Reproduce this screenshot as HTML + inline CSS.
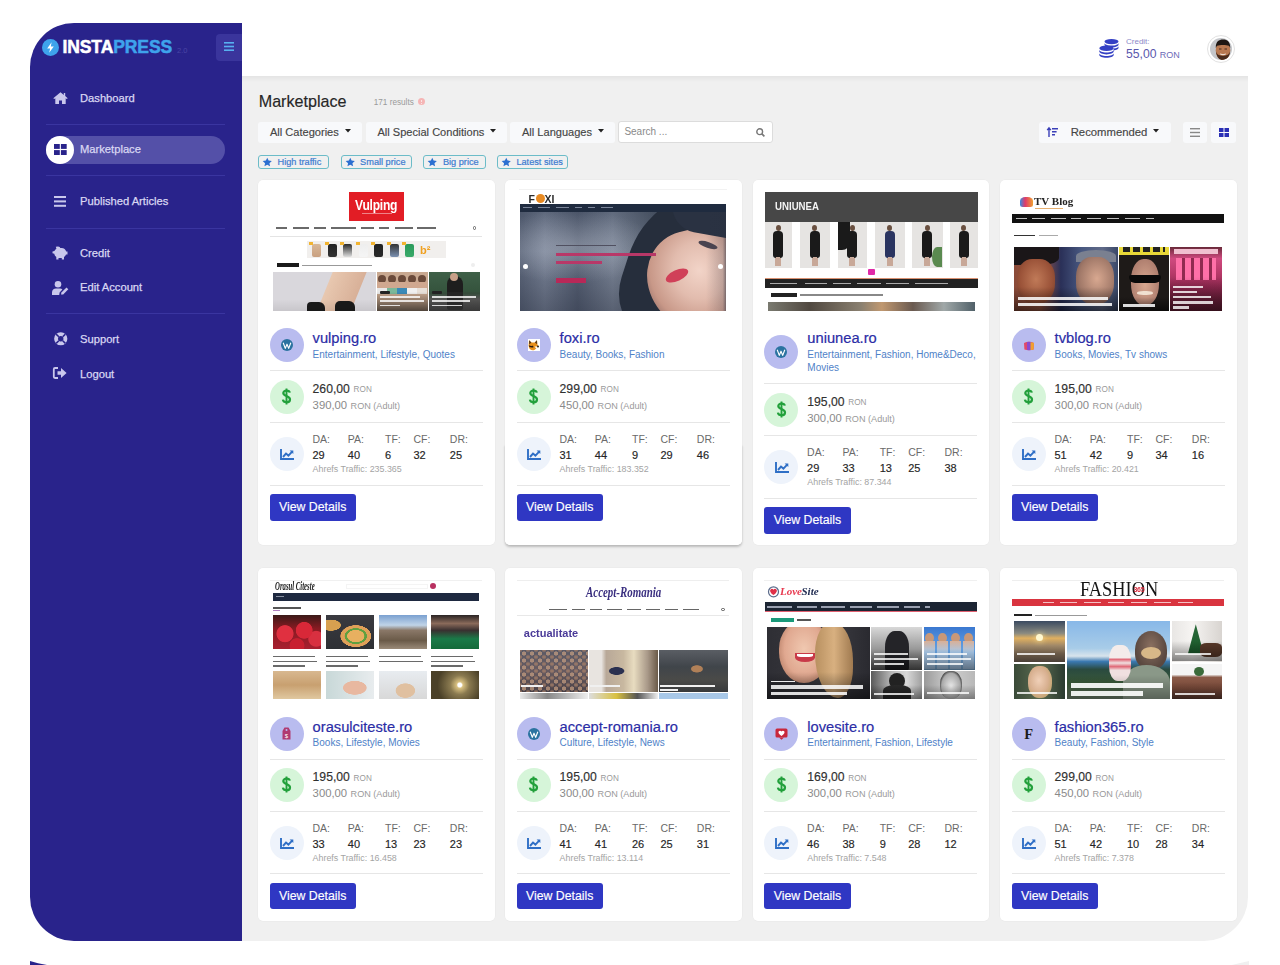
<!DOCTYPE html><html><head><meta charset="utf-8"><style>
*{box-sizing:border-box}
html,body{margin:0;padding:0}
body{width:1280px;height:965px;background:#fff;position:relative;overflow:hidden;font-family:"Liberation Sans",sans-serif}
.t{position:absolute;white-space:nowrap;line-height:1}
.r{position:absolute}
svg{position:absolute;overflow:visible}
</style></head><body>

<div class="r" style="left:242.00px;top:76.00px;width:1006.00px;height:865.00px;background:#f0f0f0;border-bottom-right-radius:44px"></div>
<div class="r" style="left:242.00px;top:76.00px;width:1006.00px;height:6.00px;background:linear-gradient(#e4e4e4,#f0f0f0);"></div>
<div class="r" style="left:242.00px;top:23.00px;width:1006.00px;height:53.00px;background:#ffffff;"></div>
<div class="r" style="left:30.00px;top:23.00px;width:212.00px;height:918.00px;background:#29238b;border-radius:44px 0 0 44px"></div>
<svg style="left:0;top:0" width="1280" height="965"><polygon points="30,961 38,963.2 47,965 30,965" fill="#29238b"/><polygon points="1249,961 1236,964 1232,965 1249,965" fill="#f0f0f0"/></svg>
<svg style="left:42px;top:38.5px" width="17" height="17" viewBox="0 0 17 17"><circle cx="8.5" cy="8.5" r="8.5" fill="#3ea3ec"/><path d="M9.6 3.2 L5.2 9.4 H8.1 L7.2 13.8 L11.8 7.4 H8.8 Z" fill="#fff"/></svg>
<div class="t" style="left:62.50px;top:39.39px;font-size:17.5px;color:#333;font-weight:700;letter-spacing:-0.1px"><span style="color:#fff;-webkit-text-stroke:0.5px #fff">INSTA</span><span style="color:#3ea3ec;-webkit-text-stroke:0.5px #3ea3ec">PRESS</span></div>
<div class="t" style="left:177.00px;top:47.15px;font-size:7.5px;color:#4a46a6;font-weight:400;">2.0</div>
<div class="r" style="left:216.00px;top:33.50px;width:26.00px;height:27.50px;background:#3a359c;border-radius:4px 0 0 4px"></div>
<svg style="left:224px;top:42px" width="10" height="9" viewBox="0 0 10 9"><rect x="0" y="0" width="10" height="1.6" fill="#57b0f0"/><rect x="0" y="3.7" width="10" height="1.6" fill="#57b0f0"/><rect x="0" y="7.4" width="10" height="1.6" fill="#57b0f0"/></svg>
<div class="r" style="left:46.00px;top:124.00px;width:179.00px;height:1.00px;background:#3a35a0;"></div>
<div class="r" style="left:46.00px;top:175.00px;width:179.00px;height:1.00px;background:#3a35a0;"></div>
<div class="r" style="left:46.00px;top:227.50px;width:179.00px;height:1.00px;background:#3a35a0;"></div>
<div class="r" style="left:46.00px;top:313.00px;width:179.00px;height:1.00px;background:#3a35a0;"></div>
<div class="r" style="left:46.00px;top:136.00px;width:179.00px;height:28.00px;background:#5450a8;border-radius:14px"></div>
<div class="r" style="left:46.00px;top:136.00px;width:28.00px;height:28.00px;background:#fff;border-radius:14px"></div>
<svg style="left:53.8px;top:144.4px" width="12.7" height="11" viewBox="0 0 12.7 11"><rect x="0" y="0" width="5.8" height="4.9" fill="#29238b"/><rect x="6.9" y="0" width="5.8" height="4.9" fill="#29238b"/><rect x="0" y="6.1" width="5.8" height="4.9" fill="#29238b"/><rect x="6.9" y="6.1" width="5.8" height="4.9" fill="#29238b"/></svg>
<div class="t" style="left:80.00px;top:92.52px;font-size:11.2px;color:#d9d7f2;font-weight:400;-webkit-text-stroke:0.25px #d9d7f2">Dashboard</div>
<div class="t" style="left:80.00px;top:143.92px;font-size:11.2px;color:#d9d7f2;font-weight:400;-webkit-text-stroke:0.25px #d9d7f2">Marketplace</div>
<div class="t" style="left:80.00px;top:196.02px;font-size:11.2px;color:#d9d7f2;font-weight:400;-webkit-text-stroke:0.25px #d9d7f2">Published Articles</div>
<div class="t" style="left:80.00px;top:248.02px;font-size:11.2px;color:#d9d7f2;font-weight:400;-webkit-text-stroke:0.25px #d9d7f2">Credit</div>
<div class="t" style="left:80.00px;top:282.27px;font-size:11.2px;color:#d9d7f2;font-weight:400;-webkit-text-stroke:0.25px #d9d7f2">Edit Account</div>
<div class="t" style="left:80.00px;top:334.27px;font-size:11.2px;color:#d9d7f2;font-weight:400;-webkit-text-stroke:0.25px #d9d7f2">Support</div>
<div class="t" style="left:80.00px;top:368.52px;font-size:11.2px;color:#d9d7f2;font-weight:400;-webkit-text-stroke:0.25px #d9d7f2">Logout</div>
<svg style="left:52.8px;top:92px" width="15" height="12" viewBox="0 0 15 12"><path d="M7.5 0.3 L0.3 6.2 L1.2 7.1 L2.3 6.2 V12 H6 V8.5 H9 V12 H12.7 V6.2 L13.8 7.1 L14.7 6.2 L12.2 4.1 V1 H10.8 V2.9 Z" fill="#c9c7ec"/></svg>
<svg style="left:54.4px;top:196.4px" width="12" height="11" viewBox="0 0 12 11"><rect y="0" width="12" height="2" fill="#c9c7ec"/><rect y="4.4" width="12" height="2" fill="#c9c7ec"/><rect y="8.8" width="12" height="2" fill="#c9c7ec"/></svg>
<svg style="left:52px;top:246px" width="16" height="14" viewBox="0 0 16 14"><path d="M6 0.5 C7.5 0.5 8.2 1.5 8.2 2 H9.5 C12 2 13.8 3.6 14.2 5.5 H15.5 V8.5 H14 C13.6 9.6 12.9 10.4 12 11 V13.5 H9.8 V12 H6.5 V13.5 H4.3 V11 C3.2 10.2 2.5 9 2.3 7.8 L0.5 7.2 V5.4 L2.4 5 C2.8 4 3.5 3.2 4.4 2.7 L3.8 0.8 Z" fill="#c9c7ec"/></svg>
<svg style="left:52px;top:281px" width="17" height="14" viewBox="0 0 17 14"><circle cx="6" cy="3.3" r="3.3" fill="#c9c7ec"/><path d="M0 14 V11.5 C0 9.2 1.8 7.6 4 7.6 H8 C9 7.6 9.8 7.9 10.4 8.4 L7.6 11.4 L7.2 14 Z" fill="#c9c7ec"/><path d="M9 13.6 L9.4 11.6 L14.5 6.5 L16.3 8.3 L11.2 13.4 Z" fill="#c9c7ec"/></svg>
<svg style="left:53.5px;top:332.3px" width="13.5" height="13.5" viewBox="0 0 13.5 13.5"><circle cx="6.75" cy="6.75" r="6.6" fill="#c9c7ec"/><circle cx="6.75" cy="6.75" r="2.7" fill="#29238b"/><path d="M2.1 2.1 L4.8 4.8 M11.4 2.1 L8.7 4.8 M2.1 11.4 L4.8 8.7 M11.4 11.4 L8.7 8.7" stroke="#29238b" stroke-width="1.5"/></svg>
<svg style="left:53px;top:367px" width="14" height="12" viewBox="0 0 14 12"><path d="M5 1 H2 C1.2 1 0.8 1.5 0.8 2.2 V9.8 C0.8 10.5 1.2 11 2 11 H5" fill="none" stroke="#c9c7ec" stroke-width="1.8"/><path d="M4.5 4.3 H8 V1 L13.6 6 L8 11 V7.7 H4.5 Z" fill="#c9c7ec"/></svg>
<svg style="left:1099px;top:39.4px" width="20" height="19" viewBox="0 0 20 19"><g fill="#3440c4"><ellipse cx="12.5" cy="2.6" rx="7" ry="2.6"/><path d="M5.5 4 C5.5 5.5 8.6 6.6 12.5 6.6 C16.4 6.6 19.5 5.5 19.5 4 V5.8 C19.5 7.3 16.4 8.4 12.5 8.4 C8.6 8.4 5.5 7.3 5.5 5.8Z"/><path d="M19.5 7.2 V9 C19.5 10.2 17.5 11.1 14.6 11.4 V9.6 C17.5 9.3 19.5 8.4 19.5 7.2Z"/><ellipse cx="7.5" cy="9.2" rx="7.2" ry="2.8"/><path d="M0.3 10.8 C0.3 12.4 3.5 13.6 7.5 13.6 C11.5 13.6 14.7 12.4 14.7 10.8 V12.6 C14.7 14.2 11.5 15.4 7.5 15.4 C3.5 15.4 0.3 14.2 0.3 12.6Z"/><path d="M0.3 14.2 C0.3 15.8 3.5 17 7.5 17 C11.5 17 14.7 15.8 14.7 14.2 V16 C14.7 17.6 11.5 18.8 7.5 18.8 C3.5 18.8 0.3 17.6 0.3 16Z"/></g></svg>
<div class="t" style="left:1126.00px;top:38.23px;font-size:8px;color:#8c89c9;font-weight:400;">Credit:</div>
<div class="t" style="left:1126.00px;top:48.17px;font-size:12.2px;color:#5a57ad;font-weight:400;">55,00</div>
<div class="t" style="left:1159.70px;top:50.88px;font-size:9px;color:#6c69b6;font-weight:400;">RON</div>
<div class="r" style="left:1206.7px;top:34.7px;width:28px;height:28px;border-radius:50%;background:#fff;border:1px solid #e2e2e2"></div>
<svg style="left:1210px;top:37.8px" width="22" height="22" viewBox="0 0 22 22"><defs><clipPath id="av"><circle cx="11" cy="11" r="11"/></clipPath></defs><g clip-path="url(#av)"><rect width="22" height="22" fill="#c4c6ca"/><ellipse cx="13" cy="12.5" rx="7.3" ry="9.5" fill="#b87850"/><path d="M5.8 10 C5.5 3.5 9 1.5 13 1.5 C17.5 1.5 20.5 4 20.2 10 L19 7.8 C16 6.8 10 6.8 7 7.8Z" fill="#1e1612"/><path d="M6 13.5 C6.5 19.5 9.5 22 13 22 C16.5 22 19.5 19.5 20 13.5 C18.5 17 16.5 17.8 13 17.8 C9.5 17.8 7.5 17 6 13.5Z" fill="#4a2c1c"/><path d="M10.2 16 Q13 17.5 15.8 16" stroke="#f4ece4" stroke-width="1" fill="none"/><path d="M9 11 H11.5 M14.5 11 H17" stroke="#3a2418" stroke-width="0.9"/></g></svg>
<div class="t" style="left:258.75px;top:93.47px;font-size:16.1px;color:#262626;font-weight:400;-webkit-text-stroke:0.15px #262626">Marketplace</div>
<div class="t" style="left:373.75px;top:98.96px;font-size:8.2px;color:#9a9a9a;font-weight:400;">171 results</div>
<div class="r" style="left:417.7px;top:98px;width:7px;height:7px;border-radius:50%;background:#f5b5b5"></div><div class="r" style="left:420.7px;top:99.6px;width:1px;height:2.6px;background:#fbe4e4"></div><div class="r" style="left:420.7px;top:102.6px;width:1px;height:1px;background:#fbe4e4"></div>
<div class="r" style="left:258.00px;top:122.00px;width:104.00px;height:21.00px;background:#f8f9fb;border-radius:3px"></div>
<div class="t" style="left:270.00px;top:126.55px;font-size:11.05px;color:#454545;font-weight:400;-webkit-text-stroke:0.15px #454545">All Categories</div>
<svg style="left:344.5px;top:129px" width="6" height="3.5" viewBox="0 0 6 3.5"><path d="M0 0 H6 L3 3.5Z" fill="#222"/></svg>
<div class="r" style="left:365.60px;top:122.00px;width:141.40px;height:21.00px;background:#f8f9fb;border-radius:3px"></div>
<div class="t" style="left:377.50px;top:126.55px;font-size:11.05px;color:#454545;font-weight:400;-webkit-text-stroke:0.15px #454545">All Special Conditions</div>
<svg style="left:489.5px;top:129px" width="6" height="3.5" viewBox="0 0 6 3.5"><path d="M0 0 H6 L3 3.5Z" fill="#222"/></svg>
<div class="r" style="left:510.00px;top:122.00px;width:105.00px;height:21.00px;background:#f8f9fb;border-radius:3px"></div>
<div class="t" style="left:522.00px;top:126.55px;font-size:11.05px;color:#454545;font-weight:400;-webkit-text-stroke:0.15px #454545">All Languages</div>
<svg style="left:597.5px;top:129px" width="6" height="3.5" viewBox="0 0 6 3.5"><path d="M0 0 H6 L3 3.5Z" fill="#222"/></svg>
<div class="r" style="left:618.00px;top:121.00px;width:154.50px;height:22.00px;background:#fff;border:1px solid #dcdcdc;border-radius:3px"></div>
<div class="t" style="left:624.40px;top:126.84px;font-size:10px;color:#8a8a8a;font-weight:400;">Search ...</div>
<svg style="left:756px;top:127.5px" width="9" height="9" viewBox="0 0 9 9"><circle cx="3.7" cy="3.7" r="2.9" fill="none" stroke="#777" stroke-width="1.4"/><path d="M5.9 5.9 L8.4 8.4" stroke="#777" stroke-width="1.6"/></svg>
<div class="r" style="left:258.00px;top:155.00px;width:71.40px;height:14.00px;background:transparent;border:1px solid #6cbcc8;border-radius:3px"></div>
<svg style="left:262.0px;top:156.6px" width="10.5" height="10.5" viewBox="0 0 24 24"><path d="M12 1.5 L15.1 8.2 L22.5 9 L17 14 L18.5 21.3 L12 17.6 L5.5 21.3 L7 14 L1.5 9 L8.9 8.2Z" fill="#2c6fd1"/></svg>
<div class="t" style="left:277.50px;top:157.61px;font-size:9.2px;color:#3c7bd0;font-weight:400;-webkit-text-stroke:0.2px #3c7bd0">High traffic</div>
<div class="r" style="left:340.60px;top:155.00px;width:71.90px;height:14.00px;background:transparent;border:1px solid #6cbcc8;border-radius:3px"></div>
<svg style="left:344.6px;top:156.6px" width="10.5" height="10.5" viewBox="0 0 24 24"><path d="M12 1.5 L15.1 8.2 L22.5 9 L17 14 L18.5 21.3 L12 17.6 L5.5 21.3 L7 14 L1.5 9 L8.9 8.2Z" fill="#2c6fd1"/></svg>
<div class="t" style="left:360.10px;top:157.61px;font-size:9.2px;color:#3c7bd0;font-weight:400;-webkit-text-stroke:0.2px #3c7bd0">Small price</div>
<div class="r" style="left:423.40px;top:155.00px;width:62.20px;height:14.00px;background:transparent;border:1px solid #6cbcc8;border-radius:3px"></div>
<svg style="left:427.4px;top:156.6px" width="10.5" height="10.5" viewBox="0 0 24 24"><path d="M12 1.5 L15.1 8.2 L22.5 9 L17 14 L18.5 21.3 L12 17.6 L5.5 21.3 L7 14 L1.5 9 L8.9 8.2Z" fill="#2c6fd1"/></svg>
<div class="t" style="left:442.90px;top:157.61px;font-size:9.2px;color:#3c7bd0;font-weight:400;-webkit-text-stroke:0.2px #3c7bd0">Big price</div>
<div class="r" style="left:496.90px;top:155.00px;width:71.50px;height:14.00px;background:transparent;border:1px solid #6cbcc8;border-radius:3px"></div>
<svg style="left:500.9px;top:156.6px" width="10.5" height="10.5" viewBox="0 0 24 24"><path d="M12 1.5 L15.1 8.2 L22.5 9 L17 14 L18.5 21.3 L12 17.6 L5.5 21.3 L7 14 L1.5 9 L8.9 8.2Z" fill="#2c6fd1"/></svg>
<div class="t" style="left:516.40px;top:157.61px;font-size:9.2px;color:#3c7bd0;font-weight:400;-webkit-text-stroke:0.2px #3c7bd0">Latest sites</div>
<div class="r" style="left:1039.40px;top:122.00px;width:26.20px;height:21.00px;background:#f8f9fb;border-radius:3px 0 0 3px"></div>
<svg style="left:1046.5px;top:127px" width="11" height="10" viewBox="0 0 11 10"><path d="M2 10 V2 M0.2 3.2 L2 0.8 L3.8 3.2" fill="none" stroke="#3a3fb8" stroke-width="1.4"/><rect x="5" y="1" width="6" height="1.5" fill="#3a3fb8"/><rect x="5" y="4" width="4.6" height="1.5" fill="#3a3fb8"/><rect x="5" y="7" width="3" height="1.5" fill="#3a3fb8"/></svg>
<div class="r" style="left:1065.60px;top:122.00px;width:105.10px;height:21.00px;background:#f8f9fb;border-radius:0 3px 3px 0"></div>
<div class="t" style="left:1070.70px;top:126.63px;font-size:11.3px;color:#454545;font-weight:400;-webkit-text-stroke:0.15px #454545">Recommended</div>
<svg style="left:1153px;top:129px" width="6" height="3.5" viewBox="0 0 6 3.5"><path d="M0 0 H6 L3 3.5Z" fill="#222"/></svg>
<div class="r" style="left:1182.70px;top:122.00px;width:24.70px;height:21.00px;background:#f8f9fb;border-radius:3px"></div>
<svg style="left:1190px;top:127.5px" width="10" height="9" viewBox="0 0 10 9"><rect y="0" width="10" height="1.4" fill="#888"/><rect y="3.8" width="10" height="1.4" fill="#888"/><rect y="7.6" width="10" height="1.4" fill="#888"/></svg>
<div class="r" style="left:1211.00px;top:122.00px;width:25.00px;height:21.00px;background:#f8f9fb;border-radius:3px"></div>
<svg style="left:1218.5px;top:127.5px" width="10" height="9" viewBox="0 0 10 9"><rect x="0" y="0" width="4.5" height="4" fill="#2a2fb5"/><rect x="5.5" y="0" width="4.5" height="4" fill="#2a2fb5"/><rect x="0" y="5" width="4.5" height="4" fill="#2a2fb5"/><rect x="5.5" y="5" width="4.5" height="4" fill="#2a2fb5"/></svg>
<div class="r" style="left:258px;top:180px;width:236.5px;height:365px;background:#fff;border-radius:5px;box-shadow:0 0 0 0.5px rgba(0,0,0,0.03)"></div>
<div style="position:absolute;left:0;top:0;width:1280px;height:965px;filter:blur(0.3px)">
<div class="r" style="left:349.00px;top:191.90px;width:54.80px;height:28.70px;background:#e21d25;"></div>
<div class="t" style="left:355.00px;top:197.38px;font-size:15.5px;color:#fff;font-weight:700;transform:scaleX(0.78);transform-origin:0 0;letter-spacing:-0.3px">Vulping</div>
<div class="r" style="left:362.00px;top:213.20px;width:30.00px;height:0.80px;background:rgba(255,255,255,0.45);"></div>
<div class="r" style="left:276.00px;top:227.40px;width:11.00px;height:1.40px;background:#6a6a6a;"></div>
<div class="r" style="left:293.00px;top:227.40px;width:16.00px;height:1.40px;background:#6a6a6a;"></div>
<div class="r" style="left:314.00px;top:227.40px;width:12.00px;height:1.40px;background:#6a6a6a;"></div>
<div class="r" style="left:331.00px;top:227.40px;width:25.00px;height:1.40px;background:#6a6a6a;"></div>
<div class="r" style="left:361.00px;top:227.40px;width:13.00px;height:1.40px;background:#6a6a6a;"></div>
<div class="r" style="left:379.00px;top:227.40px;width:10.00px;height:1.40px;background:#6a6a6a;"></div>
<div class="r" style="left:395.00px;top:227.40px;width:18.00px;height:1.40px;background:#6a6a6a;"></div>
<div class="r" style="left:417.00px;top:227.40px;width:19.00px;height:1.40px;background:#6a6a6a;"></div>
<div class="r" style="left:472.50px;top:226.30px;width:3.50px;height:3.50px;background:transparent;border-radius:50%;border:1px solid #666"></div>
<div class="r" style="left:270.00px;top:236.00px;width:212.00px;height:0.80px;background:#e4e4e4;"></div>
<div class="r" style="left:306.80px;top:240.80px;width:139.20px;height:16.90px;background:#f1efed;"></div>
<div class="r" style="left:312.00px;top:244.00px;width:9.00px;height:13.00px;background:linear-gradient(180deg,#d8b898,#c9a080);border-radius:2px"></div>
<div class="r" style="left:309.00px;top:242.00px;width:4.00px;height:3.00px;background:#f2b430;"></div>
<div class="r" style="left:327.50px;top:244.00px;width:9.00px;height:13.00px;background:linear-gradient(180deg,#222,#333);border-radius:2px"></div>
<div class="r" style="left:324.50px;top:242.00px;width:4.00px;height:3.00px;background:#f2b430;"></div>
<div class="r" style="left:343.00px;top:244.00px;width:9.00px;height:13.00px;background:linear-gradient(180deg,#2a2a2a,#ddd);border-radius:2px"></div>
<div class="r" style="left:340.00px;top:242.00px;width:4.00px;height:3.00px;background:#f2b430;"></div>
<div class="r" style="left:358.50px;top:244.00px;width:9.00px;height:13.00px;background:linear-gradient(180deg,#eee,#f5f5f5);border-radius:2px"></div>
<div class="r" style="left:355.50px;top:242.00px;width:4.00px;height:3.00px;background:#f2b430;"></div>
<div class="r" style="left:374.00px;top:244.00px;width:9.00px;height:13.00px;background:linear-gradient(180deg,#222,#2a2a2a);border-radius:2px"></div>
<div class="r" style="left:371.00px;top:242.00px;width:4.00px;height:3.00px;background:#f2b430;"></div>
<div class="r" style="left:389.50px;top:244.00px;width:9.00px;height:13.00px;background:linear-gradient(180deg,#333,#7a90b0);border-radius:2px"></div>
<div class="r" style="left:386.50px;top:242.00px;width:4.00px;height:3.00px;background:#f2b430;"></div>
<div class="r" style="left:405.00px;top:244.00px;width:9.00px;height:13.00px;background:linear-gradient(180deg,#2a9a5a,#3aaa6a);border-radius:2px"></div>
<div class="r" style="left:402.00px;top:242.00px;width:4.00px;height:3.00px;background:#f2b430;"></div>
<div class="t" style="left:420.00px;top:244.69px;font-size:11px;color:#f0a020;font-weight:700;">b²</div>
<div class="r" style="left:276.80px;top:262.80px;width:21.90px;height:4.70px;background:#1a1a1a;"></div>
<div class="r" style="left:302.00px;top:264.50px;width:70.00px;height:1.60px;background:#999;"></div>
<div class="r" style="left:471.00px;top:263.00px;width:4.00px;height:4.00px;background:#eee;border-radius:50%"></div>
<div class="r" style="left:273.00px;top:272.00px;width:103.00px;height:38.90px;overflow:hidden;background:#d9d7dc">
<div class="r" style="left:52px;top:-5px;width:34px;height:48px;background:linear-gradient(90deg,#e8c8b0,#d8b098);transform:skewX(-22deg);border-radius:6px"></div>
<div class="r" style="left:34px;top:30px;width:18px;height:10px;background:#1a1a1a;border-radius:4px 6px 0 0"></div>
<div class="r" style="left:62px;top:29px;width:20px;height:11px;background:#1a1a1a;border-radius:5px 6px 0 0"></div>
<div class="r" style="left:0;top:0;width:103px;height:38.9px;background:linear-gradient(180deg,rgba(255,255,255,0) 70%,rgba(0,0,0,0.08))"></div>
</div>
<div class="r" style="left:377.00px;top:272.00px;width:51.00px;height:38.90px;overflow:hidden;background:#c8a890">
<div class="r" style="left:1px;top:3px;width:8px;height:8px;background:#6a4a3a;border-radius:50%"></div>
<div class="r" style="left:0px;top:10px;width:10px;height:12px;background:#d0a890"></div>
<div class="r" style="left:0px;top:16px;width:10px;height:6px;background:#e8e8e8"></div>
<div class="r" style="left:11px;top:3px;width:8px;height:8px;background:#6a4a3a;border-radius:50%"></div>
<div class="r" style="left:10px;top:10px;width:10px;height:12px;background:#d0a890"></div>
<div class="r" style="left:10px;top:16px;width:10px;height:6px;background:#7ab89a"></div>
<div class="r" style="left:21px;top:3px;width:8px;height:8px;background:#6a4a3a;border-radius:50%"></div>
<div class="r" style="left:20px;top:10px;width:10px;height:12px;background:#d0a890"></div>
<div class="r" style="left:20px;top:16px;width:10px;height:6px;background:#3a8ab8"></div>
<div class="r" style="left:31px;top:3px;width:8px;height:8px;background:#6a4a3a;border-radius:50%"></div>
<div class="r" style="left:30px;top:10px;width:10px;height:12px;background:#d0a890"></div>
<div class="r" style="left:30px;top:16px;width:10px;height:6px;background:#f0f0f0"></div>
<div class="r" style="left:41px;top:3px;width:8px;height:8px;background:#6a4a3a;border-radius:50%"></div>
<div class="r" style="left:40px;top:10px;width:10px;height:12px;background:#d0a890"></div>
<div class="r" style="left:40px;top:16px;width:10px;height:6px;background:#e8e0d8"></div>
<div class="r" style="left:0;top:20px;width:51px;height:19px;background:linear-gradient(180deg,rgba(60,50,45,0) ,rgba(40,35,30,0.75))"></div>
<div class="r" style="left:3px;top:24.0px;width:40px;height:1.8px;background:rgba(255,255,255,0.8)"></div>
<div class="r" style="left:3px;top:28.3px;width:44px;height:1.8px;background:rgba(255,255,255,0.8)"></div>
<div class="r" style="left:3px;top:32.6px;width:20px;height:1.8px;background:rgba(255,255,255,0.8)"></div>
<div class="r" style="left:3px;top:19px;width:10px;height:3px;background:#222;border-radius:1px"></div>
</div>
<div class="r" style="left:429.00px;top:272.00px;width:51.00px;height:38.90px;overflow:hidden;background:linear-gradient(180deg,#3f6048,#34523c 55%,#6a6a68 70%,#555 100%)">
<div class="r" style="left:18px;top:4px;width:16px;height:34px;background:#1e1e1e;border-radius:8px 8px 2px 2px"></div>
<div class="r" style="left:21px;top:1px;width:8px;height:8px;background:#c8a088;border-radius:50%"></div>
<div class="r" style="left:0;top:20px;width:51px;height:19px;background:linear-gradient(180deg,rgba(60,60,60,0.2),rgba(50,50,50,0.8))"></div>
<div class="r" style="left:3px;top:24.0px;width:44px;height:1.8px;background:rgba(255,255,255,0.8)"></div>
<div class="r" style="left:3px;top:28.3px;width:38px;height:1.8px;background:rgba(255,255,255,0.8)"></div>
<div class="r" style="left:3px;top:32.6px;width:30px;height:1.8px;background:rgba(255,255,255,0.8)"></div>
<div class="r" style="left:3px;top:19px;width:10px;height:3px;background:#222;border-radius:1px"></div>
</div>
</div>
<div class="r" style="left:269.5px;top:328.3px;width:34px;height:34px;border-radius:50%;background:#b9bcef"></div>
<svg style="left:280.5px;top:339.3px" width="12" height="12" viewBox="0 0 12 12"><circle cx="6" cy="6" r="6" fill="#2b73a0"/><path d="M2.2 3.8 L4.3 9.4 L6 5.2 L7.7 9.4 L9.8 3.8" fill="none" stroke="#fff" stroke-width="1.15" stroke-linejoin="round"/></svg>
<div class="t" style="left:312.60px;top:330.96px;font-size:14.7px;color:#2b2da6;font-weight:400;-webkit-text-stroke:0.2px #2b2da6">vulping.ro</div>
<div class="t" style="left:312.60px;top:349.54px;font-size:10px;color:#4f82c8;font-weight:400;">Entertainment, Lifestyle, Quotes</div>
<div class="r" style="left:269.50px;top:370.30px;width:213.00px;height:1.00px;background:#e6e6e6;"></div>
<div class="r" style="left:269.50px;top:422.10px;width:213.00px;height:1.00px;background:#e6e6e6;"></div>
<div class="r" style="left:269.50px;top:484.50px;width:213.00px;height:1.00px;background:#e6e6e6;"></div>
<div class="r" style="left:269.5px;top:379.7px;width:34px;height:34px;border-radius:50%;background:#d6f5d9"></div>
<svg style="left:282px;top:387.8px" width="9" height="17" viewBox="0 0 9 17"><path d="M4.5 0.5 V16.5" stroke="#22a03b" stroke-width="1.9"/><path d="M7.8 4.6 C7.5 3 6.2 2.6 4.5 2.6 C2.6 2.6 1.3 3.6 1.3 5 C1.3 8.6 8 7.4 8 11.4 C8 13.1 6.5 14.2 4.5 14.2 C2.5 14.2 1.2 13.4 0.9 11.6" fill="none" stroke="#22a03b" stroke-width="2.2"/></svg>
<div class="t" style="left:312.60px;top:382.57px;font-size:12.2px;color:#303030;font-weight:400;-webkit-text-stroke:0.15px #303030">260,00</div>
<div class="t" style="left:353.60px;top:385.96px;font-size:8.2px;color:#9a9a9a;font-weight:400;">RON</div>
<div class="t" style="left:312.60px;top:399.63px;font-size:11.3px;color:#8a8a8a;font-weight:400;">390,00</div>
<div class="t" style="left:350.60px;top:401.50px;font-size:9.1px;color:#9a9a9a;font-weight:400;">RON (Adult)</div>
<div class="r" style="left:269.5px;top:437.4px;width:34px;height:34px;border-radius:50%;background:#eef3fb"></div>
<svg style="left:279.8px;top:449.2px" width="14" height="11" viewBox="0 0 14 11"><path d="M1 0 V10 H14" fill="none" stroke="#2f6fc6" stroke-width="1.9"/><path d="M3 8 L6 4.6 L8.4 6.6 L12.4 2.4" fill="none" stroke="#2f6fc6" stroke-width="1.9"/><path d="M9.6 1.4 H13.3 V5.1Z" fill="#2f6fc6"/></svg>
<div class="t" style="left:312.40px;top:434.41px;font-size:10.5px;color:#6a6a6a;font-weight:400;">DA:</div>
<div class="t" style="left:312.40px;top:450.09px;font-size:11px;color:#252525;font-weight:400;-webkit-text-stroke:0.15px #252525">29</div>
<div class="t" style="left:347.80px;top:434.41px;font-size:10.5px;color:#6a6a6a;font-weight:400;">PA:</div>
<div class="t" style="left:347.80px;top:450.09px;font-size:11px;color:#252525;font-weight:400;-webkit-text-stroke:0.15px #252525">40</div>
<div class="t" style="left:385.00px;top:434.41px;font-size:10.5px;color:#6a6a6a;font-weight:400;">TF:</div>
<div class="t" style="left:385.00px;top:450.09px;font-size:11px;color:#252525;font-weight:400;-webkit-text-stroke:0.15px #252525">6</div>
<div class="t" style="left:413.50px;top:434.41px;font-size:10.5px;color:#6a6a6a;font-weight:400;">CF:</div>
<div class="t" style="left:413.50px;top:450.09px;font-size:11px;color:#252525;font-weight:400;-webkit-text-stroke:0.15px #252525">32</div>
<div class="t" style="left:449.80px;top:434.41px;font-size:10.5px;color:#6a6a6a;font-weight:400;">DR:</div>
<div class="t" style="left:449.80px;top:450.09px;font-size:11px;color:#252525;font-weight:400;-webkit-text-stroke:0.15px #252525">25</div>
<div class="t" style="left:312.60px;top:465.27px;font-size:8.9px;color:#a4a4a4;font-weight:400;">Ahrefs Traffic: 235.365</div>
<div class="r" style="left:269.7px;top:494.25px;width:86.2px;height:26.5px;background:#2f37c3;border-radius:3px"></div>
<div class="t" style="left:279.00px;top:501.19px;font-size:12.3px;color:#fff;font-weight:400;-webkit-text-stroke:0.15px #fff">View Details</div>
<div class="r" style="left:505px;top:180px;width:236.5px;height:365px;background:#fff;border-radius:5px;box-shadow:0 0 0 0.5px rgba(0,0,0,0.03)"></div>
<div class="r" style="left:505px;top:445px;width:236.5px;height:100px;border-radius:0 0 5px 5px;box-shadow:0 1.5px 2.5px rgba(0,0,0,0.22)"></div>
<div class="r" style="left:505px;top:430px;width:236.5px;height:115px;background:#fff;border-radius:0 0 5px 5px"></div>
<div style="position:absolute;left:0;top:0;width:1280px;height:965px;filter:blur(0.3px)">
<div class="r" style="left:519.00px;top:189.00px;width:208.00px;height:0.60px;background:#f2f2f2;"></div>
<div class="t" style="left:528.50px;top:193.91px;font-size:10.5px;color:#2a2a2a;font-weight:700;">F</div>
<div class="r" style="left:535.60px;top:193.50px;width:9.00px;height:9.00px;background:#e88a22;border-radius:50%;"></div>
<div class="t" style="left:544.50px;top:193.91px;font-size:10.5px;color:#2a2a2a;font-weight:700;">XI</div>
<div class="r" style="left:519.70px;top:203.70px;width:206.30px;height:7.90px;background:#1f2b3f;"></div>
<div class="r" style="left:523.00px;top:207.00px;width:9.00px;height:1.20px;background:#7a8498;"></div>
<div class="r" style="left:538.00px;top:207.00px;width:12.00px;height:1.20px;background:#7a8498;"></div>
<div class="r" style="left:556.00px;top:207.00px;width:13.00px;height:1.20px;background:#7a8498;"></div>
<div class="r" style="left:575.00px;top:207.00px;width:7.00px;height:1.20px;background:#7a8498;"></div>
<div class="r" style="left:588.00px;top:207.00px;width:7.00px;height:1.20px;background:#7a8498;"></div>
<div class="r" style="left:601.00px;top:207.00px;width:12.00px;height:1.20px;background:#7a8498;"></div>
<div class="r" style="left:519.70px;top:211.60px;width:206.30px;height:99.30px;overflow:hidden;background:linear-gradient(90deg,#5e687c 0%,#7a8498 12%,#5a6478 28%,#7e889a 45%,#56606f 65%,#343c4c 100%)">
<div class="r" style="left:0;top:0;width:206px;height:99px;background:radial-gradient(ellipse at 25% 35%,rgba(200,205,215,0.35),rgba(0,0,0,0) 40%),linear-gradient(180deg,rgba(30,40,60,0.3),rgba(0,0,0,0) 40%,rgba(20,25,40,0.35))"></div>
<div class="r" style="left:108px;top:-20px;width:120px;height:150px;background:#262e3c;border-radius:55% 0 0 30%;transform:rotate(18deg)"></div>
<div class="r" style="left:128px;top:18px;width:92px;height:100px;background:radial-gradient(ellipse at 58% 42%,#f2d4c8 0,#e2bcae 35%,#c89888 65%,#7a5a58 90%);border-radius:48% 20% 30% 55%;transform:rotate(-14deg)"></div>
<div class="r" style="left:150px;top:-4px;width:70px;height:26px;background:#2a3242;border-radius:0 0 20px 50px;transform:rotate(10deg)"></div>
<div class="r" style="left:186px;top:0;width:24px;height:99px;background:linear-gradient(90deg,rgba(40,48,64,0),rgba(40,48,64,0.2) 70%,#2a3040)"></div>
<div class="r" style="left:145px;top:58px;width:24px;height:11px;background:#d04058;border-radius:50%;transform:rotate(-24deg)"></div>
<div class="r" style="left:178px;top:30px;width:20px;height:6px;background:#4a4450;border-radius:50%;transform:rotate(18deg)"></div>
<div class="r" style="left:36px;top:33px;width:60px;height:1.6px;background:#505060"></div>
<div class="r" style="left:36px;top:41px;width:100px;height:3.5px;background:#b83868"></div>
<div class="r" style="left:36px;top:49px;width:46px;height:3.5px;background:#b83868"></div>
<div class="r" style="left:36px;top:66px;width:30px;height:5px;background:#b82858"></div>
<div class="r" style="left:3.5px;top:52px;width:5px;height:5px;background:#fff;border-radius:50%"></div>
<div class="r" style="left:198px;top:52px;width:5px;height:5px;background:#fff;border-radius:50%"></div>
</div>
</div>
<div class="r" style="left:516.5px;top:328.3px;width:34px;height:34px;border-radius:50%;background:#b9bcef"></div>
<div class="r" style="left:527.5px;top:339.3px;width:12px;height:12px;background:#fff"></div><svg style="left:528.0px;top:340.3px" width="11" height="10.5" viewBox="0 0 11 10.5"><path d="M1 0.3 L3.6 2.6 H6.6 L9 0.3 L9.5 5 L10.8 6.4 L8.5 8 C7.5 9.8 6 10.3 4.8 10.3 C2.5 10.3 0.6 8.6 0.6 5.5Z" fill="#e8901c"/><path d="M1 0.3 L3.4 2.6 L1.2 4.5Z M9 0.3 L6.8 2.6 L9.1 4.3Z" fill="#5a3a1a"/><path d="M0.8 5.2 C2 5.8 3.5 6.2 5 5.8 L5.6 7.2 C4 7.8 2.2 7.4 1.2 6.8Z" fill="#2a1a10"/><path d="M6.5 6.5 L10.8 6.4 L8.2 8.4Z" fill="#fff"/><circle cx="10" cy="6.5" r="0.9" fill="#111"/></svg>
<div class="t" style="left:559.60px;top:330.96px;font-size:14.7px;color:#2b2da6;font-weight:400;-webkit-text-stroke:0.2px #2b2da6">foxi.ro</div>
<div class="t" style="left:559.60px;top:349.54px;font-size:10px;color:#4f82c8;font-weight:400;">Beauty, Books, Fashion</div>
<div class="r" style="left:516.50px;top:370.30px;width:213.00px;height:1.00px;background:#e6e6e6;"></div>
<div class="r" style="left:516.50px;top:422.10px;width:213.00px;height:1.00px;background:#e6e6e6;"></div>
<div class="r" style="left:516.50px;top:484.50px;width:213.00px;height:1.00px;background:#e6e6e6;"></div>
<div class="r" style="left:516.5px;top:379.7px;width:34px;height:34px;border-radius:50%;background:#d6f5d9"></div>
<svg style="left:529px;top:387.8px" width="9" height="17" viewBox="0 0 9 17"><path d="M4.5 0.5 V16.5" stroke="#22a03b" stroke-width="1.9"/><path d="M7.8 4.6 C7.5 3 6.2 2.6 4.5 2.6 C2.6 2.6 1.3 3.6 1.3 5 C1.3 8.6 8 7.4 8 11.4 C8 13.1 6.5 14.2 4.5 14.2 C2.5 14.2 1.2 13.4 0.9 11.6" fill="none" stroke="#22a03b" stroke-width="2.2"/></svg>
<div class="t" style="left:559.60px;top:382.57px;font-size:12.2px;color:#303030;font-weight:400;-webkit-text-stroke:0.15px #303030">299,00</div>
<div class="t" style="left:600.60px;top:385.96px;font-size:8.2px;color:#9a9a9a;font-weight:400;">RON</div>
<div class="t" style="left:559.60px;top:399.63px;font-size:11.3px;color:#8a8a8a;font-weight:400;">450,00</div>
<div class="t" style="left:597.60px;top:401.50px;font-size:9.1px;color:#9a9a9a;font-weight:400;">RON (Adult)</div>
<div class="r" style="left:516.5px;top:437.4px;width:34px;height:34px;border-radius:50%;background:#eef3fb"></div>
<svg style="left:526.8px;top:449.2px" width="14" height="11" viewBox="0 0 14 11"><path d="M1 0 V10 H14" fill="none" stroke="#2f6fc6" stroke-width="1.9"/><path d="M3 8 L6 4.6 L8.4 6.6 L12.4 2.4" fill="none" stroke="#2f6fc6" stroke-width="1.9"/><path d="M9.6 1.4 H13.3 V5.1Z" fill="#2f6fc6"/></svg>
<div class="t" style="left:559.40px;top:434.41px;font-size:10.5px;color:#6a6a6a;font-weight:400;">DA:</div>
<div class="t" style="left:559.40px;top:450.09px;font-size:11px;color:#252525;font-weight:400;-webkit-text-stroke:0.15px #252525">31</div>
<div class="t" style="left:594.80px;top:434.41px;font-size:10.5px;color:#6a6a6a;font-weight:400;">PA:</div>
<div class="t" style="left:594.80px;top:450.09px;font-size:11px;color:#252525;font-weight:400;-webkit-text-stroke:0.15px #252525">44</div>
<div class="t" style="left:632.00px;top:434.41px;font-size:10.5px;color:#6a6a6a;font-weight:400;">TF:</div>
<div class="t" style="left:632.00px;top:450.09px;font-size:11px;color:#252525;font-weight:400;-webkit-text-stroke:0.15px #252525">9</div>
<div class="t" style="left:660.50px;top:434.41px;font-size:10.5px;color:#6a6a6a;font-weight:400;">CF:</div>
<div class="t" style="left:660.50px;top:450.09px;font-size:11px;color:#252525;font-weight:400;-webkit-text-stroke:0.15px #252525">29</div>
<div class="t" style="left:696.80px;top:434.41px;font-size:10.5px;color:#6a6a6a;font-weight:400;">DR:</div>
<div class="t" style="left:696.80px;top:450.09px;font-size:11px;color:#252525;font-weight:400;-webkit-text-stroke:0.15px #252525">46</div>
<div class="t" style="left:559.60px;top:465.27px;font-size:8.9px;color:#a4a4a4;font-weight:400;">Ahrefs Traffic: 183.352</div>
<div class="r" style="left:516.7px;top:494.25px;width:86.2px;height:26.5px;background:#2f37c3;border-radius:3px"></div>
<div class="t" style="left:526.00px;top:501.19px;font-size:12.3px;color:#fff;font-weight:400;-webkit-text-stroke:0.15px #fff">View Details</div>
<div class="r" style="left:752.7px;top:180px;width:236.5px;height:365px;background:#fff;border-radius:5px;box-shadow:0 0 0 0.5px rgba(0,0,0,0.03)"></div>
<div style="position:absolute;left:0;top:0;width:1280px;height:965px;filter:blur(0.3px)">
<div class="r" style="left:764.50px;top:191.90px;width:213.00px;height:29.90px;background:#474747;"></div>
<div class="t" style="left:774.70px;top:201.31px;font-size:10.5px;color:#f4f4f4;font-weight:700;transform:scaleX(0.92);transform-origin:0 0">UNIUNEA</div>
<div class="r" style="left:764.50px;top:221.80px;width:27.50px;height:46.00px;overflow:hidden;background:#e6e4e2">
<div class="r" style="left:11.25px;top:3px;width:5px;height:6px;background:#6a5040;border-radius:50%"></div>
<div class="r" style="left:8.75px;top:9px;width:10px;height:27px;background:#1a1a1a;border-radius:4px 4px 3px 3px"></div>
<div class="r" style="left:11.75px;top:35px;width:4px;height:9px;background:#d0b0a0"></div>
<div class="r" style="left:10.75px;top:36px;width:6px;height:8px;background:#c8a898"></div>
</div>
<div class="r" style="left:799.50px;top:221.80px;width:30.00px;height:46.00px;overflow:hidden;background:#e6e4e2">
<div class="r" style="left:12.5px;top:3px;width:5px;height:6px;background:#6a5040;border-radius:50%"></div>
<div class="r" style="left:10.0px;top:9px;width:10px;height:27px;background:#1a1a1a;border-radius:4px 4px 3px 3px"></div>
<div class="r" style="left:13.0px;top:35px;width:4px;height:9px;background:#d0b0a0"></div>
<div class="r" style="left:12.0px;top:36px;width:6px;height:8px;background:#c8a898"></div>
</div>
<div class="r" style="left:837.60px;top:221.80px;width:29.40px;height:46.00px;overflow:hidden;background:#e6e4e2">
<div class="r" style="left:12.199999999999989px;top:3px;width:5px;height:6px;background:#6a5040;border-radius:50%"></div>
<div class="r" style="left:9.699999999999989px;top:9px;width:10px;height:27px;background:#1a1a1a;border-radius:4px 4px 3px 3px"></div>
<div class="r" style="left:12.699999999999989px;top:35px;width:4px;height:9px;background:#d0b0a0"></div>
<div class="r" style="left:11.699999999999989px;top:36px;width:6px;height:8px;background:#c8a898"></div>
<div class="r" style="left:0;top:0;width:12px;height:28px;background:#1a1a1a;border-radius:0 0 8px 0"></div>
</div>
<div class="r" style="left:874.70px;top:221.80px;width:30.30px;height:46.00px;overflow:hidden;background:#e6e4e2">
<div class="r" style="left:12.649999999999977px;top:3px;width:5px;height:6px;background:#6a5040;border-radius:50%"></div>
<div class="r" style="left:10.149999999999977px;top:9px;width:10px;height:27px;background:#2a3460;border-radius:4px 4px 3px 3px"></div>
<div class="r" style="left:13.149999999999977px;top:35px;width:4px;height:9px;background:#d0b0a0"></div>
<div class="r" style="left:12.149999999999977px;top:36px;width:6px;height:8px;background:#c8a898"></div>
</div>
<div class="r" style="left:912.00px;top:221.80px;width:30.60px;height:46.00px;overflow:hidden;background:#e6e4e2">
<div class="r" style="left:12.800000000000011px;top:3px;width:5px;height:6px;background:#6a5040;border-radius:50%"></div>
<div class="r" style="left:10.300000000000011px;top:9px;width:10px;height:27px;background:#1a1a1a;border-radius:4px 4px 3px 3px"></div>
<div class="r" style="left:13.300000000000011px;top:35px;width:4px;height:9px;background:#d0b0a0"></div>
<div class="r" style="left:12.300000000000011px;top:36px;width:6px;height:8px;background:#c8a898"></div>
<div class="r" style="left:20px;top:25px;width:10px;height:20px;background:#5a8a50;border-radius:50% 0 0 50%"></div>
</div>
<div class="r" style="left:950.00px;top:221.80px;width:27.50px;height:46.00px;overflow:hidden;background:#e6e4e2">
<div class="r" style="left:11.25px;top:3px;width:5px;height:6px;background:#6a5040;border-radius:50%"></div>
<div class="r" style="left:8.75px;top:9px;width:10px;height:27px;background:#1a1a1a;border-radius:4px 4px 3px 3px"></div>
<div class="r" style="left:11.75px;top:35px;width:4px;height:9px;background:#d0b0a0"></div>
<div class="r" style="left:10.75px;top:36px;width:6px;height:8px;background:#c8a898"></div>
</div>
<div class="r" style="left:868.00px;top:268.70px;width:6.70px;height:6.70px;background:#e02aa8;border-radius:1px"></div>
<div class="r" style="left:764.50px;top:278.00px;width:213.00px;height:0.80px;background:#d89070;"></div>
<div class="r" style="left:764.50px;top:278.80px;width:213.00px;height:9.20px;background:#222;"></div>
<div class="r" style="left:770.00px;top:282.60px;width:27.00px;height:1.50px;background:#aaa;"></div>
<div class="r" style="left:805.00px;top:282.60px;width:22.00px;height:1.50px;background:#aaa;"></div>
<div class="r" style="left:833.00px;top:282.60px;width:18.00px;height:1.50px;background:#aaa;"></div>
<div class="r" style="left:857.00px;top:282.60px;width:24.00px;height:1.50px;background:#aaa;"></div>
<div class="r" style="left:886.00px;top:282.60px;width:23.00px;height:1.50px;background:#aaa;"></div>
<div class="r" style="left:915.00px;top:282.60px;width:33.00px;height:1.50px;background:#aaa;"></div>
<div class="r" style="left:771.00px;top:292.70px;width:26.00px;height:4.70px;background:#222;"></div>
<div class="r" style="left:800.00px;top:294.30px;width:83.00px;height:1.60px;background:#888;"></div>
<div class="r" style="left:767.50px;top:302.00px;width:207.50px;height:8.90px;overflow:hidden;background:linear-gradient(90deg,#7a7a70,#504840 20%,#8a8070 45%,#c09870 55%,#6a5a50 70%,#a0a8a8 85%,#506068)">
</div>
</div>
<div class="r" style="left:764.2px;top:334.8px;width:34px;height:34px;border-radius:50%;background:#b9bcef"></div>
<svg style="left:775.2px;top:345.8px" width="12" height="12" viewBox="0 0 12 12"><circle cx="6" cy="6" r="6" fill="#2b73a0"/><path d="M2.2 3.8 L4.3 9.4 L6 5.2 L7.7 9.4 L9.8 3.8" fill="none" stroke="#fff" stroke-width="1.15" stroke-linejoin="round"/></svg>
<div class="t" style="left:807.30px;top:330.96px;font-size:14.7px;color:#2b2da6;font-weight:400;-webkit-text-stroke:0.2px #2b2da6">uniunea.ro</div>
<div class="t" style="left:807.30px;top:349.54px;font-size:10px;color:#4f82c8;font-weight:400;">Entertainment, Fashion, Home&amp;Deco,</div>
<div class="t" style="left:807.30px;top:363.24px;font-size:10px;color:#4f82c8;font-weight:400;">Movies</div>
<div class="r" style="left:764.20px;top:383.30px;width:213.00px;height:1.00px;background:#e6e6e6;"></div>
<div class="r" style="left:764.20px;top:435.10px;width:213.00px;height:1.00px;background:#e6e6e6;"></div>
<div class="r" style="left:764.20px;top:497.50px;width:213.00px;height:1.00px;background:#e6e6e6;"></div>
<div class="r" style="left:764.2px;top:392.7px;width:34px;height:34px;border-radius:50%;background:#d6f5d9"></div>
<svg style="left:776.7px;top:400.8px" width="9" height="17" viewBox="0 0 9 17"><path d="M4.5 0.5 V16.5" stroke="#22a03b" stroke-width="1.9"/><path d="M7.8 4.6 C7.5 3 6.2 2.6 4.5 2.6 C2.6 2.6 1.3 3.6 1.3 5 C1.3 8.6 8 7.4 8 11.4 C8 13.1 6.5 14.2 4.5 14.2 C2.5 14.2 1.2 13.4 0.9 11.6" fill="none" stroke="#22a03b" stroke-width="2.2"/></svg>
<div class="t" style="left:807.30px;top:395.57px;font-size:12.2px;color:#303030;font-weight:400;-webkit-text-stroke:0.15px #303030">195,00</div>
<div class="t" style="left:848.30px;top:398.96px;font-size:8.2px;color:#9a9a9a;font-weight:400;">RON</div>
<div class="t" style="left:807.30px;top:412.63px;font-size:11.3px;color:#8a8a8a;font-weight:400;">300,00</div>
<div class="t" style="left:845.30px;top:414.50px;font-size:9.1px;color:#9a9a9a;font-weight:400;">RON (Adult)</div>
<div class="r" style="left:764.2px;top:450.4px;width:34px;height:34px;border-radius:50%;background:#eef3fb"></div>
<svg style="left:774.5px;top:462.2px" width="14" height="11" viewBox="0 0 14 11"><path d="M1 0 V10 H14" fill="none" stroke="#2f6fc6" stroke-width="1.9"/><path d="M3 8 L6 4.6 L8.4 6.6 L12.4 2.4" fill="none" stroke="#2f6fc6" stroke-width="1.9"/><path d="M9.6 1.4 H13.3 V5.1Z" fill="#2f6fc6"/></svg>
<div class="t" style="left:807.10px;top:447.41px;font-size:10.5px;color:#6a6a6a;font-weight:400;">DA:</div>
<div class="t" style="left:807.10px;top:463.09px;font-size:11px;color:#252525;font-weight:400;-webkit-text-stroke:0.15px #252525">29</div>
<div class="t" style="left:842.50px;top:447.41px;font-size:10.5px;color:#6a6a6a;font-weight:400;">PA:</div>
<div class="t" style="left:842.50px;top:463.09px;font-size:11px;color:#252525;font-weight:400;-webkit-text-stroke:0.15px #252525">33</div>
<div class="t" style="left:879.70px;top:447.41px;font-size:10.5px;color:#6a6a6a;font-weight:400;">TF:</div>
<div class="t" style="left:879.70px;top:463.09px;font-size:11px;color:#252525;font-weight:400;-webkit-text-stroke:0.15px #252525">13</div>
<div class="t" style="left:908.20px;top:447.41px;font-size:10.5px;color:#6a6a6a;font-weight:400;">CF:</div>
<div class="t" style="left:908.20px;top:463.09px;font-size:11px;color:#252525;font-weight:400;-webkit-text-stroke:0.15px #252525">25</div>
<div class="t" style="left:944.50px;top:447.41px;font-size:10.5px;color:#6a6a6a;font-weight:400;">DR:</div>
<div class="t" style="left:944.50px;top:463.09px;font-size:11px;color:#252525;font-weight:400;-webkit-text-stroke:0.15px #252525">38</div>
<div class="t" style="left:807.30px;top:478.27px;font-size:8.9px;color:#a4a4a4;font-weight:400;">Ahrefs Traffic: 87.344</div>
<div class="r" style="left:764.4000000000001px;top:507.25px;width:86.2px;height:26.5px;background:#2f37c3;border-radius:3px"></div>
<div class="t" style="left:773.70px;top:514.19px;font-size:12.3px;color:#fff;font-weight:400;-webkit-text-stroke:0.15px #fff">View Details</div>
<div class="r" style="left:1000px;top:180px;width:236.5px;height:365px;background:#fff;border-radius:5px;box-shadow:0 0 0 0.5px rgba(0,0,0,0.03)"></div>
<div style="position:absolute;left:0;top:0;width:1280px;height:965px;filter:blur(0.3px)">
<div class="r" style="left:1019.50px;top:197.00px;width:13px;height:10px;background:linear-gradient(90deg,#3a8ae0,#e03a6a 40%,#f0a030);border-radius:40% 40% 20% 20%"></div>
<div class="t" style="left:1034.00px;top:196.29px;font-size:11px;color:#222;font-weight:700;font-family:'Liberation Serif',serif">TV Blog</div>
<div class="r" style="left:1035.00px;top:207.50px;width:28.00px;height:0.80px;background:#e8b070;"></div>
<div class="r" style="left:1011.50px;top:213.80px;width:212.50px;height:9.70px;background:#111;"></div>
<div class="r" style="left:1016.00px;top:218.00px;width:11.00px;height:1.20px;background:#bdbdbd;"></div>
<div class="r" style="left:1032.00px;top:218.00px;width:13.00px;height:1.20px;background:#bdbdbd;"></div>
<div class="r" style="left:1051.00px;top:218.00px;width:15.00px;height:1.20px;background:#bdbdbd;"></div>
<div class="r" style="left:1071.00px;top:218.00px;width:10.00px;height:1.20px;background:#bdbdbd;"></div>
<div class="r" style="left:1087.00px;top:218.00px;width:14.00px;height:1.20px;background:#bdbdbd;"></div>
<div class="r" style="left:1107.00px;top:218.00px;width:12.00px;height:1.20px;background:#bdbdbd;"></div>
<div class="r" style="left:1125.00px;top:218.00px;width:15.00px;height:1.20px;background:#bdbdbd;"></div>
<div class="r" style="left:1146.00px;top:218.00px;width:8.00px;height:1.20px;background:#bdbdbd;"></div>
<div class="r" style="left:1014.00px;top:234.50px;width:21.00px;height:1.80px;background:#333;"></div>
<div class="r" style="left:1039.00px;top:234.50px;width:19.00px;height:1.50px;background:#aaa;"></div>
<div class="r" style="left:1014.40px;top:246.70px;width:103.40px;height:64.20px;overflow:hidden;background:linear-gradient(90deg,#8a4a38 0%,#a05a44 25%,#2a3058 45%,#485880 65%,#606a88 85%,#3a4868 100%)">
<div class="r" style="left:0;top:0;width:45px;height:18px;background:#1a1618;border-radius:0 0 40% 0"></div>
<div class="r" style="left:3px;top:12px;width:38px;height:45px;background:radial-gradient(ellipse at 50% 45%,#c07a58,#9a5238 60%,#6a3828);border-radius:40% 40% 45% 45%"></div>
<div class="r" style="left:62px;top:3px;width:40px;height:12px;background:#7a8090;border-radius:50% 50% 0 0"></div>
<div class="r" style="left:62px;top:10px;width:38px;height:48px;background:radial-gradient(ellipse at 55% 45%,#d8a890,#a07868 60%,#604848);border-radius:40% 40% 45% 45%"></div>
<div class="r" style="left:0;top:40px;width:103.4px;height:24.2px;background:linear-gradient(180deg,rgba(0,0,0,0),rgba(0,0,0,0.55))"></div>
<div class="r" style="left:4px;top:50px;width:90px;height:3.2px;background:rgba(255,255,255,0.85)"></div>
<div class="r" style="left:4px;top:56.5px;width:94px;height:3.2px;background:rgba(255,255,255,0.85)"></div>
</div>
<div class="r" style="left:1118.50px;top:246.70px;width:50.80px;height:64.20px;overflow:hidden;background:#1e1a18">
<div class="r" style="left:0;top:0;width:51px;height:8px;background:#e8d838"></div>
<div class="r" style="left:4px;top:0px;width:42px;height:5px;background:repeating-linear-gradient(90deg,#222 0 7px,transparent 7px 10px)"></div>
<div class="r" style="left:12px;top:12px;width:28px;height:46px;background:radial-gradient(ellipse at 50% 55%,#d8a890,#b08070 70%);border-radius:45%"></div>
<div class="r" style="left:10px;top:28px;width:32px;height:8px;background:#0a0a0a;border-radius:2px 2px 6px 6px"></div>
<div class="r" style="left:18px;top:44px;width:16px;height:4px;background:#f0e0d0;border-radius:40%"></div>
<div class="r" style="left:0;top:50px;width:51px;height:14px;background:linear-gradient(180deg,rgba(0,0,0,0),rgba(0,0,0,0.6))"></div>
<div class="r" style="left:4px;top:57.5px;width:32px;height:3px;background:rgba(255,255,255,0.85)"></div>
</div>
<div class="r" style="left:1170.00px;top:246.70px;width:52.00px;height:64.20px;overflow:hidden;background:linear-gradient(180deg,#6a2a3a 0%,#d04a80 18%,#b83a6a 40%,#902850 65%,#4a1828 100%)">
<div class="r" style="left:4px;top:2px;width:44px;height:5px;background:#f0c0d0"></div>
<div class="r" style="left:6px;top:11px;width:40px;height:22px;background:repeating-linear-gradient(90deg,#ff70a8 0 6px,#902a50 6px 9px)"></div>
<div class="r" style="left:0;top:30px;width:52px;height:34px;background:linear-gradient(180deg,rgba(40,10,20,0),rgba(40,10,20,0.6))"></div>
<div class="r" style="left:3px;top:39.0px;width:30px;height:2.4px;background:rgba(255,255,255,0.8)"></div>
<div class="r" style="left:3px;top:44.2px;width:24px;height:2.4px;background:rgba(255,255,255,0.8)"></div>
<div class="r" style="left:3px;top:49.4px;width:38px;height:2.4px;background:rgba(255,255,255,0.8)"></div>
<div class="r" style="left:3px;top:54.6px;width:40px;height:2.4px;background:rgba(255,255,255,0.8)"></div>
<div class="r" style="left:3px;top:59.8px;width:16px;height:2.4px;background:rgba(255,255,255,0.8)"></div>
</div>
</div>
<div class="r" style="left:1011.5px;top:328.3px;width:34px;height:34px;border-radius:50%;background:#b9bcef"></div>
<svg style="left:1022.5px;top:339.3px" width="12" height="12" viewBox="0 0 12 12"><path d="M1 4 Q6 1.5 11 4 L10.6 10.5 Q6 11.8 1.4 10.5Z" fill="#e04a6a"/><path d="M4 3 Q6 2.5 8 3 L8 11 Q6 11.3 4 11Z" fill="#8a4ad0"/><path d="M7.5 3.2 Q9.5 3.3 11 4 L10.6 10.5 Q9 11 7.5 11Z" fill="#f0a030"/></svg>
<div class="t" style="left:1054.60px;top:330.96px;font-size:14.7px;color:#2b2da6;font-weight:400;-webkit-text-stroke:0.2px #2b2da6">tvblog.ro</div>
<div class="t" style="left:1054.60px;top:349.54px;font-size:10px;color:#4f82c8;font-weight:400;">Books, Movies, Tv shows</div>
<div class="r" style="left:1011.50px;top:370.30px;width:213.00px;height:1.00px;background:#e6e6e6;"></div>
<div class="r" style="left:1011.50px;top:422.10px;width:213.00px;height:1.00px;background:#e6e6e6;"></div>
<div class="r" style="left:1011.50px;top:484.50px;width:213.00px;height:1.00px;background:#e6e6e6;"></div>
<div class="r" style="left:1011.5px;top:379.7px;width:34px;height:34px;border-radius:50%;background:#d6f5d9"></div>
<svg style="left:1024px;top:387.8px" width="9" height="17" viewBox="0 0 9 17"><path d="M4.5 0.5 V16.5" stroke="#22a03b" stroke-width="1.9"/><path d="M7.8 4.6 C7.5 3 6.2 2.6 4.5 2.6 C2.6 2.6 1.3 3.6 1.3 5 C1.3 8.6 8 7.4 8 11.4 C8 13.1 6.5 14.2 4.5 14.2 C2.5 14.2 1.2 13.4 0.9 11.6" fill="none" stroke="#22a03b" stroke-width="2.2"/></svg>
<div class="t" style="left:1054.60px;top:382.57px;font-size:12.2px;color:#303030;font-weight:400;-webkit-text-stroke:0.15px #303030">195,00</div>
<div class="t" style="left:1095.60px;top:385.96px;font-size:8.2px;color:#9a9a9a;font-weight:400;">RON</div>
<div class="t" style="left:1054.60px;top:399.63px;font-size:11.3px;color:#8a8a8a;font-weight:400;">300,00</div>
<div class="t" style="left:1092.60px;top:401.50px;font-size:9.1px;color:#9a9a9a;font-weight:400;">RON (Adult)</div>
<div class="r" style="left:1011.5px;top:437.4px;width:34px;height:34px;border-radius:50%;background:#eef3fb"></div>
<svg style="left:1021.8px;top:449.2px" width="14" height="11" viewBox="0 0 14 11"><path d="M1 0 V10 H14" fill="none" stroke="#2f6fc6" stroke-width="1.9"/><path d="M3 8 L6 4.6 L8.4 6.6 L12.4 2.4" fill="none" stroke="#2f6fc6" stroke-width="1.9"/><path d="M9.6 1.4 H13.3 V5.1Z" fill="#2f6fc6"/></svg>
<div class="t" style="left:1054.40px;top:434.41px;font-size:10.5px;color:#6a6a6a;font-weight:400;">DA:</div>
<div class="t" style="left:1054.40px;top:450.09px;font-size:11px;color:#252525;font-weight:400;-webkit-text-stroke:0.15px #252525">51</div>
<div class="t" style="left:1089.80px;top:434.41px;font-size:10.5px;color:#6a6a6a;font-weight:400;">PA:</div>
<div class="t" style="left:1089.80px;top:450.09px;font-size:11px;color:#252525;font-weight:400;-webkit-text-stroke:0.15px #252525">42</div>
<div class="t" style="left:1127.00px;top:434.41px;font-size:10.5px;color:#6a6a6a;font-weight:400;">TF:</div>
<div class="t" style="left:1127.00px;top:450.09px;font-size:11px;color:#252525;font-weight:400;-webkit-text-stroke:0.15px #252525">9</div>
<div class="t" style="left:1155.50px;top:434.41px;font-size:10.5px;color:#6a6a6a;font-weight:400;">CF:</div>
<div class="t" style="left:1155.50px;top:450.09px;font-size:11px;color:#252525;font-weight:400;-webkit-text-stroke:0.15px #252525">34</div>
<div class="t" style="left:1191.80px;top:434.41px;font-size:10.5px;color:#6a6a6a;font-weight:400;">DR:</div>
<div class="t" style="left:1191.80px;top:450.09px;font-size:11px;color:#252525;font-weight:400;-webkit-text-stroke:0.15px #252525">16</div>
<div class="t" style="left:1054.60px;top:465.27px;font-size:8.9px;color:#a4a4a4;font-weight:400;">Ahrefs Traffic: 20.421</div>
<div class="r" style="left:1011.7px;top:494.25px;width:86.2px;height:26.5px;background:#2f37c3;border-radius:3px"></div>
<div class="t" style="left:1021.00px;top:501.19px;font-size:12.3px;color:#fff;font-weight:400;-webkit-text-stroke:0.15px #fff">View Details</div>
<div class="r" style="left:258px;top:567.7px;width:236.5px;height:353.2px;background:#fff;border-radius:5px;box-shadow:0 0 0 0.5px rgba(0,0,0,0.03)"></div>
<div style="position:absolute;left:0;top:0;width:1280px;height:965px;filter:blur(0.3px)">
<div class="r" style="left:270.00px;top:579.50px;width:212.00px;height:0.60px;background:#f0f0f0;"></div>
<div class="t" style="left:274.80px;top:579.00px;font-size:13px;color:#1a1a1a;font-weight:700;font-style:italic;font-family:'Liberation Serif',serif;transform:scaleX(0.52);transform-origin:0 0">Orasul Citeste</div>
<div class="r" style="left:345.60px;top:583.60px;width:82.00px;height:5.00px;background:#fff;border:0.5px solid #f4f4f4"></div>
<div class="r" style="left:429.50px;top:583.10px;width:6.00px;height:6.00px;background:#b83060;border-radius:50%;"></div>
<div class="r" style="left:272.70px;top:592.90px;width:206.60px;height:8.10px;background:#1e2940;"></div>
<div class="r" style="left:276.00px;top:596.30px;width:8.00px;height:1.20px;background:#8890a0;"></div>
<div class="r" style="left:273.00px;top:607.20px;width:28.00px;height:1.50px;background:#555;"></div>
<div class="r" style="left:273.00px;top:610.00px;width:7.00px;height:0.80px;background:#b080c0;"></div>
<div class="r" style="left:273.00px;top:614.50px;width:48.30px;height:34.90px;background:radial-gradient(circle at 25% 55%,#e03040 0 20%,transparent 22%),radial-gradient(circle at 65% 45%,#d82838 0 22%,transparent 24%),radial-gradient(circle at 50% 90%,#c82030 0 18%,transparent 20%),radial-gradient(circle at 90% 70%,#d83040 0 15%,transparent 17%),linear-gradient(180deg,#3a1a18,#8a1a22 40%,#a82030);"></div>
<div class="r" style="left:273.00px;top:655.80px;width:42.00px;height:1.40px;background:#6a6a6a;"></div>
<div class="r" style="left:273.00px;top:660.50px;width:44.00px;height:1.40px;background:#6a6a6a;"></div>
<div class="r" style="left:273.00px;top:665.20px;width:32.00px;height:1.40px;background:#6a6a6a;"></div>
<div class="r" style="left:273.00px;top:670.70px;width:48.30px;height:28.20px;background:linear-gradient(180deg,#d8b890,#c8a070 50%,#e0c8a0);"></div>
<div class="r" style="left:325.90px;top:614.50px;width:47.90px;height:34.90px;background:radial-gradient(ellipse at 62% 62%,#e8b060 0 20%,#60a040 21% 26%,#e0a058 27% 36%,transparent 37%),radial-gradient(ellipse at 10% 30%,#d8a050 0 16%,transparent 17%),linear-gradient(180deg,#3a3a40,#2e3034);"></div>
<div class="r" style="left:325.90px;top:655.80px;width:42.00px;height:1.40px;background:#6a6a6a;"></div>
<div class="r" style="left:325.90px;top:660.50px;width:44.00px;height:1.40px;background:#6a6a6a;"></div>
<div class="r" style="left:325.90px;top:665.20px;width:32.00px;height:1.40px;background:#6a6a6a;"></div>
<div class="r" style="left:325.90px;top:670.70px;width:47.90px;height:28.20px;background:radial-gradient(ellipse at 60% 60%,#e8b8a0 0 28%,transparent 30%),linear-gradient(90deg,#c8d8d8,#e8ecee);"></div>
<div class="r" style="left:378.50px;top:614.50px;width:48.30px;height:34.90px;background:linear-gradient(180deg,#7aa0d0 0%,#c0d4e8 30%,#8a7868 45%,#6a5a48 75%,#9a8a78 100%);"></div>
<div class="r" style="left:378.50px;top:655.80px;width:42.00px;height:1.40px;background:#6a6a6a;"></div>
<div class="r" style="left:378.50px;top:660.50px;width:44.00px;height:1.40px;background:#6a6a6a;"></div>
<div class="r" style="left:378.50px;top:665.20px;width:0.00px;height:1.40px;background:#6a6a6a;"></div>
<div class="r" style="left:378.50px;top:670.70px;width:48.30px;height:28.20px;background:radial-gradient(ellipse at 55% 70%,#e0c0a0 0 25%,transparent 27%),linear-gradient(180deg,#e8ecf0,#d8d8d8);"></div>
<div class="r" style="left:431.20px;top:614.50px;width:48.10px;height:34.90px;background:linear-gradient(180deg,#2a2424 0%,#8a6a5a 25%,#3a3030 45%,#1a7a48 70%,#146a3a 100%);"></div>
<div class="r" style="left:431.20px;top:655.80px;width:42.00px;height:1.40px;background:#6a6a6a;"></div>
<div class="r" style="left:431.20px;top:660.50px;width:44.00px;height:1.40px;background:#6a6a6a;"></div>
<div class="r" style="left:431.20px;top:665.20px;width:32.00px;height:1.40px;background:#6a6a6a;"></div>
<div class="r" style="left:431.20px;top:670.70px;width:48.10px;height:28.20px;background:radial-gradient(circle at 60% 50%,#fff 0 6%,#d8c080 10%,#8a7a50 30%,#4a4028 70%);"></div>
</div>
<div class="r" style="left:269.5px;top:716.9000000000001px;width:34px;height:34px;border-radius:50%;background:#b9bcef"></div>
<svg style="left:282.0px;top:727.4000000000001px" width="9" height="13" viewBox="0 0 9 13"><path d="M2.5 0.5 L6.5 0.5 L8.5 4 L8.5 12.5 L0.5 12.5 L0.5 4Z" fill="#b03a70"/><circle cx="4.5" cy="3" r="1" fill="#b9bcef"/><text x="4.5" y="10.5" font-size="6" text-anchor="middle" fill="#fff" font-family="Liberation Sans">$</text></svg>
<div class="t" style="left:312.60px;top:719.56px;font-size:14.7px;color:#2b2da6;font-weight:400;-webkit-text-stroke:0.2px #2b2da6">orasulciteste.ro</div>
<div class="t" style="left:312.60px;top:738.13px;font-size:10px;color:#4f82c8;font-weight:400;">Books, Lifestyle, Movies</div>
<div class="r" style="left:269.50px;top:758.90px;width:213.00px;height:1.00px;background:#e6e6e6;"></div>
<div class="r" style="left:269.50px;top:810.70px;width:213.00px;height:1.00px;background:#e6e6e6;"></div>
<div class="r" style="left:269.50px;top:873.10px;width:213.00px;height:1.00px;background:#e6e6e6;"></div>
<div class="r" style="left:269.5px;top:768.3px;width:34px;height:34px;border-radius:50%;background:#d6f5d9"></div>
<svg style="left:282px;top:776.4000000000001px" width="9" height="17" viewBox="0 0 9 17"><path d="M4.5 0.5 V16.5" stroke="#22a03b" stroke-width="1.9"/><path d="M7.8 4.6 C7.5 3 6.2 2.6 4.5 2.6 C2.6 2.6 1.3 3.6 1.3 5 C1.3 8.6 8 7.4 8 11.4 C8 13.1 6.5 14.2 4.5 14.2 C2.5 14.2 1.2 13.4 0.9 11.6" fill="none" stroke="#22a03b" stroke-width="2.2"/></svg>
<div class="t" style="left:312.60px;top:771.17px;font-size:12.2px;color:#303030;font-weight:400;-webkit-text-stroke:0.15px #303030">195,00</div>
<div class="t" style="left:353.60px;top:774.56px;font-size:8.2px;color:#9a9a9a;font-weight:400;">RON</div>
<div class="t" style="left:312.60px;top:788.23px;font-size:11.3px;color:#8a8a8a;font-weight:400;">300,00</div>
<div class="t" style="left:350.60px;top:790.10px;font-size:9.1px;color:#9a9a9a;font-weight:400;">RON (Adult)</div>
<div class="r" style="left:269.5px;top:826.0px;width:34px;height:34px;border-radius:50%;background:#eef3fb"></div>
<svg style="left:279.8px;top:837.8px" width="14" height="11" viewBox="0 0 14 11"><path d="M1 0 V10 H14" fill="none" stroke="#2f6fc6" stroke-width="1.9"/><path d="M3 8 L6 4.6 L8.4 6.6 L12.4 2.4" fill="none" stroke="#2f6fc6" stroke-width="1.9"/><path d="M9.6 1.4 H13.3 V5.1Z" fill="#2f6fc6"/></svg>
<div class="t" style="left:312.40px;top:823.01px;font-size:10.5px;color:#6a6a6a;font-weight:400;">DA:</div>
<div class="t" style="left:312.40px;top:838.69px;font-size:11px;color:#252525;font-weight:400;-webkit-text-stroke:0.15px #252525">33</div>
<div class="t" style="left:347.80px;top:823.01px;font-size:10.5px;color:#6a6a6a;font-weight:400;">PA:</div>
<div class="t" style="left:347.80px;top:838.69px;font-size:11px;color:#252525;font-weight:400;-webkit-text-stroke:0.15px #252525">40</div>
<div class="t" style="left:385.00px;top:823.01px;font-size:10.5px;color:#6a6a6a;font-weight:400;">TF:</div>
<div class="t" style="left:385.00px;top:838.69px;font-size:11px;color:#252525;font-weight:400;-webkit-text-stroke:0.15px #252525">13</div>
<div class="t" style="left:413.50px;top:823.01px;font-size:10.5px;color:#6a6a6a;font-weight:400;">CF:</div>
<div class="t" style="left:413.50px;top:838.69px;font-size:11px;color:#252525;font-weight:400;-webkit-text-stroke:0.15px #252525">23</div>
<div class="t" style="left:449.80px;top:823.01px;font-size:10.5px;color:#6a6a6a;font-weight:400;">DR:</div>
<div class="t" style="left:449.80px;top:838.69px;font-size:11px;color:#252525;font-weight:400;-webkit-text-stroke:0.15px #252525">23</div>
<div class="t" style="left:312.60px;top:853.87px;font-size:8.9px;color:#a4a4a4;font-weight:400;">Ahrefs Traffic: 16.458</div>
<div class="r" style="left:269.7px;top:882.85px;width:86.2px;height:26.5px;background:#2f37c3;border-radius:3px"></div>
<div class="t" style="left:279.00px;top:889.79px;font-size:12.3px;color:#fff;font-weight:400;-webkit-text-stroke:0.15px #fff">View Details</div>
<div class="r" style="left:505px;top:567.7px;width:236.5px;height:353.2px;background:#fff;border-radius:5px;box-shadow:0 0 0 0.5px rgba(0,0,0,0.03)"></div>
<div style="position:absolute;left:0;top:0;width:1280px;height:965px;filter:blur(0.3px)">
<div class="r" style="left:517.00px;top:580.00px;width:212.00px;height:0.60px;background:#eee;"></div>
<div class="t" style="left:586.00px;top:585.65px;font-size:14px;color:#3a2f80;font-weight:700;font-style:italic;font-family:'Liberation Serif',serif;transform:scaleX(0.78);transform-origin:0 0">Accept-Romania</div>
<div class="r" style="left:548.80px;top:609.00px;width:18.20px;height:1.30px;background:#666;"></div>
<div class="r" style="left:572.00px;top:609.00px;width:13.00px;height:1.30px;background:#666;"></div>
<div class="r" style="left:590.00px;top:609.00px;width:12.00px;height:1.30px;background:#666;"></div>
<div class="r" style="left:607.00px;top:609.00px;width:15.00px;height:1.30px;background:#666;"></div>
<div class="r" style="left:627.00px;top:609.00px;width:14.00px;height:1.30px;background:#666;"></div>
<div class="r" style="left:646.00px;top:609.00px;width:14.00px;height:1.30px;background:#666;"></div>
<div class="r" style="left:665.00px;top:609.00px;width:13.00px;height:1.30px;background:#666;"></div>
<div class="r" style="left:683.00px;top:609.00px;width:15.60px;height:1.30px;background:#666;"></div>
<div class="r" style="left:721.00px;top:607.50px;width:3.50px;height:3.50px;background:transparent;border-radius:50%;border:1px solid #555"></div>
<div class="r" style="left:517.00px;top:614.80px;width:212.00px;height:0.80px;background:#e8e8e8;"></div>
<div class="t" style="left:523.80px;top:628.19px;font-size:11px;color:#4a3a98;font-weight:700;">actualitate</div>
<div class="r" style="left:519.70px;top:650.00px;width:68.20px;height:42.10px;background:radial-gradient(circle,rgba(200,160,130,0.7) 0 1.8px,transparent 2.4px) 0 0/8px 7px,radial-gradient(circle,rgba(170,130,105,0.7) 0 1.6px,transparent 2.2px) 4px 3.5px/8px 7px,linear-gradient(180deg,#5a5a66,#665a60 50%,#4a4248);"></div>
<div class="r" style="left:589.00px;top:650.00px;width:69.00px;height:42.10px;background:radial-gradient(ellipse at 40% 50%,#2a3050 0 12%,transparent 14%),linear-gradient(90deg,#e8e4e0 0 18%,#b8a898 25%,#c8b8a0 50%,#e8dcc0 65%,#a89888 85%,#6a5a48);"></div>
<div class="r" style="left:659.00px;top:650.00px;width:69.00px;height:42.10px;background:radial-gradient(ellipse at 55% 45%,#b08058 0 10%,transparent 12%),linear-gradient(180deg,#5a5e64,#40454a 40%,#4a4a48 70%,#383a3c);"></div>
<div class="r" style="left:521.00px;top:684.50px;width:22.00px;height:2.20px;background:#f0f0f0;"></div>
<div class="r" style="left:590.00px;top:684.50px;width:30.00px;height:2.20px;background:#f0f0f0;"></div>
<div class="r" style="left:660.00px;top:684.50px;width:55.00px;height:2.20px;background:#f0f0f0;"></div>
<div class="r" style="left:660.00px;top:688.50px;width:18.00px;height:2.20px;background:#f0f0f0;"></div>
<div class="r" style="left:519.70px;top:693.00px;width:68.20px;height:6.00px;background:linear-gradient(90deg,#e8e8e8,#888 40%,#eee);"></div>
<div class="r" style="left:589.00px;top:693.00px;width:69.00px;height:6.00px;background:linear-gradient(90deg,#ddd,#d8c040 40%,#555 70%,#eee);"></div>
<div class="r" style="left:659.00px;top:693.00px;width:69.00px;height:6.00px;background:#a8c8e8;"></div>
</div>
<div class="r" style="left:516.5px;top:716.9000000000001px;width:34px;height:34px;border-radius:50%;background:#b9bcef"></div>
<svg style="left:527.5px;top:727.9000000000001px" width="12" height="12" viewBox="0 0 12 12"><circle cx="6" cy="6" r="6" fill="#2b73a0"/><path d="M2.2 3.8 L4.3 9.4 L6 5.2 L7.7 9.4 L9.8 3.8" fill="none" stroke="#fff" stroke-width="1.15" stroke-linejoin="round"/></svg>
<div class="t" style="left:559.60px;top:719.56px;font-size:14.7px;color:#2b2da6;font-weight:400;-webkit-text-stroke:0.2px #2b2da6">accept-romania.ro</div>
<div class="t" style="left:559.60px;top:738.13px;font-size:10px;color:#4f82c8;font-weight:400;">Culture, Lifestyle, News</div>
<div class="r" style="left:516.50px;top:758.90px;width:213.00px;height:1.00px;background:#e6e6e6;"></div>
<div class="r" style="left:516.50px;top:810.70px;width:213.00px;height:1.00px;background:#e6e6e6;"></div>
<div class="r" style="left:516.50px;top:873.10px;width:213.00px;height:1.00px;background:#e6e6e6;"></div>
<div class="r" style="left:516.5px;top:768.3px;width:34px;height:34px;border-radius:50%;background:#d6f5d9"></div>
<svg style="left:529px;top:776.4000000000001px" width="9" height="17" viewBox="0 0 9 17"><path d="M4.5 0.5 V16.5" stroke="#22a03b" stroke-width="1.9"/><path d="M7.8 4.6 C7.5 3 6.2 2.6 4.5 2.6 C2.6 2.6 1.3 3.6 1.3 5 C1.3 8.6 8 7.4 8 11.4 C8 13.1 6.5 14.2 4.5 14.2 C2.5 14.2 1.2 13.4 0.9 11.6" fill="none" stroke="#22a03b" stroke-width="2.2"/></svg>
<div class="t" style="left:559.60px;top:771.17px;font-size:12.2px;color:#303030;font-weight:400;-webkit-text-stroke:0.15px #303030">195,00</div>
<div class="t" style="left:600.60px;top:774.56px;font-size:8.2px;color:#9a9a9a;font-weight:400;">RON</div>
<div class="t" style="left:559.60px;top:788.23px;font-size:11.3px;color:#8a8a8a;font-weight:400;">300,00</div>
<div class="t" style="left:597.60px;top:790.10px;font-size:9.1px;color:#9a9a9a;font-weight:400;">RON (Adult)</div>
<div class="r" style="left:516.5px;top:826.0px;width:34px;height:34px;border-radius:50%;background:#eef3fb"></div>
<svg style="left:526.8px;top:837.8px" width="14" height="11" viewBox="0 0 14 11"><path d="M1 0 V10 H14" fill="none" stroke="#2f6fc6" stroke-width="1.9"/><path d="M3 8 L6 4.6 L8.4 6.6 L12.4 2.4" fill="none" stroke="#2f6fc6" stroke-width="1.9"/><path d="M9.6 1.4 H13.3 V5.1Z" fill="#2f6fc6"/></svg>
<div class="t" style="left:559.40px;top:823.01px;font-size:10.5px;color:#6a6a6a;font-weight:400;">DA:</div>
<div class="t" style="left:559.40px;top:838.69px;font-size:11px;color:#252525;font-weight:400;-webkit-text-stroke:0.15px #252525">41</div>
<div class="t" style="left:594.80px;top:823.01px;font-size:10.5px;color:#6a6a6a;font-weight:400;">PA:</div>
<div class="t" style="left:594.80px;top:838.69px;font-size:11px;color:#252525;font-weight:400;-webkit-text-stroke:0.15px #252525">41</div>
<div class="t" style="left:632.00px;top:823.01px;font-size:10.5px;color:#6a6a6a;font-weight:400;">TF:</div>
<div class="t" style="left:632.00px;top:838.69px;font-size:11px;color:#252525;font-weight:400;-webkit-text-stroke:0.15px #252525">26</div>
<div class="t" style="left:660.50px;top:823.01px;font-size:10.5px;color:#6a6a6a;font-weight:400;">CF:</div>
<div class="t" style="left:660.50px;top:838.69px;font-size:11px;color:#252525;font-weight:400;-webkit-text-stroke:0.15px #252525">25</div>
<div class="t" style="left:696.80px;top:823.01px;font-size:10.5px;color:#6a6a6a;font-weight:400;">DR:</div>
<div class="t" style="left:696.80px;top:838.69px;font-size:11px;color:#252525;font-weight:400;-webkit-text-stroke:0.15px #252525">31</div>
<div class="t" style="left:559.60px;top:853.87px;font-size:8.9px;color:#a4a4a4;font-weight:400;">Ahrefs Traffic: 13.114</div>
<div class="r" style="left:516.7px;top:882.85px;width:86.2px;height:26.5px;background:#2f37c3;border-radius:3px"></div>
<div class="t" style="left:526.00px;top:889.79px;font-size:12.3px;color:#fff;font-weight:400;-webkit-text-stroke:0.15px #fff">View Details</div>
<div class="r" style="left:752.7px;top:567.7px;width:236.5px;height:353.2px;background:#fff;border-radius:5px;box-shadow:0 0 0 0.5px rgba(0,0,0,0.03)"></div>
<div style="position:absolute;left:0;top:0;width:1280px;height:965px;filter:blur(0.3px)">
<div class="r" style="left:764.00px;top:579.50px;width:213.00px;height:0.60px;background:#f0f0f0;"></div>
<svg style="left:767.90px;top:585.80px" width="11" height="11.5" viewBox="0 0 11 11.5"><circle cx="5.5" cy="5.8" r="5" fill="none" stroke="#5a6a8a" stroke-width="1.2"/><path d="M5.5 9 C2 6.6 1.6 4.6 2.6 3.4 C3.6 2.4 5 2.8 5.5 3.8 C6 2.8 7.4 2.4 8.4 3.4 C9.4 4.6 9 6.6 5.5 9Z" fill="#e03048"/></svg>
<div class="t" style="left:780.00px;top:586.19px;font-size:11px;color:#e83a50;font-weight:700;font-style:italic;font-family:'Liberation Serif',serif">Love</div>
<div class="t" style="left:801.50px;top:586.19px;font-size:11px;color:#1e2a50;font-weight:700;font-style:italic;font-family:'Liberation Serif',serif">Site</div>
<div class="r" style="left:764.50px;top:601.80px;width:212.70px;height:10.20px;background:#1c2533;"></div>
<div class="r" style="left:764.50px;top:611.40px;width:212.70px;height:0.90px;background:#e06070;"></div>
<div class="r" style="left:767.00px;top:606.20px;width:25.00px;height:1.40px;background:#9aa0b0;"></div>
<div class="r" style="left:797.00px;top:606.20px;width:20.00px;height:1.40px;background:#9aa0b0;"></div>
<div class="r" style="left:821.00px;top:606.20px;width:24.00px;height:1.40px;background:#9aa0b0;"></div>
<div class="r" style="left:850.00px;top:606.20px;width:22.00px;height:1.40px;background:#9aa0b0;"></div>
<div class="r" style="left:877.00px;top:606.20px;width:22.00px;height:1.40px;background:#9aa0b0;"></div>
<div class="r" style="left:904.00px;top:606.20px;width:16.00px;height:1.40px;background:#9aa0b0;"></div>
<div class="r" style="left:925.00px;top:606.20px;width:5.00px;height:1.40px;background:#9aa0b0;"></div>
<div class="r" style="left:770.80px;top:617.50px;width:23.60px;height:4.50px;background:#1a9a7a;"></div>
<div class="r" style="left:797.00px;top:619.00px;width:14.00px;height:1.50px;background:#555;"></div>
<div class="r" style="left:767.40px;top:627.20px;width:102.60px;height:71.70px;overflow:hidden;background:linear-gradient(90deg,#2e2e34,#3c3c42 60%,#2a2a30)">
<div class="r" style="left:12px;top:-6px;width:50px;height:62px;background:radial-gradient(ellipse at 50% 45%,#f0c8b0,#e0a890 55%,#b88068 80%);border-radius:45% 45% 50% 50%"></div>
<div class="r" style="left:48px;top:-4px;width:38px;height:75px;background:linear-gradient(90deg,#b89060,#d8b080 50%,#a07a50);border-radius:40% 50% 40% 60%"></div>
<div class="r" style="left:28px;top:26px;width:20px;height:9px;background:#c83a48;border-radius:0 0 50% 50%"></div>
<div class="r" style="left:30px;top:27px;width:16px;height:3px;background:#fff;border-radius:0 0 40% 40%"></div>
<div class="r" style="left:0;top:45px;width:103px;height:27px;background:linear-gradient(180deg,rgba(0,0,0,0),rgba(0,0,0,0.5))"></div>
<div class="r" style="left:4px;top:53.5px;width:24px;height:1.5px;background:#eee"></div>
<div class="r" style="left:4px;top:58px;width:92px;height:3.4px;background:rgba(255,255,255,0.85)"></div>
<div class="r" style="left:4px;top:64.5px;width:76px;height:3.4px;background:rgba(255,255,255,0.85)"></div>
</div>
<div class="r" style="left:871.00px;top:627.20px;width:51.00px;height:42.60px;overflow:hidden;background:linear-gradient(180deg,#d8d8d8,#9a9a9a 50%,#707070)">
<div class="r" style="left:14px;top:4px;width:24px;height:40px;background:#242428;border-radius:40% 40% 10% 10%"></div>
<div class="r" style="left:0;top:22px;width:51px;height:21px;background:linear-gradient(180deg,rgba(0,0,0,0),rgba(0,0,0,0.55))"></div>
<div class="r" style="left:3px;top:26.0px;width:34px;height:2.2px;background:rgba(255,255,255,0.8)"></div>
<div class="r" style="left:3px;top:30.8px;width:44px;height:2.2px;background:rgba(255,255,255,0.8)"></div>
<div class="r" style="left:3px;top:35.6px;width:30px;height:2.2px;background:rgba(255,255,255,0.8)"></div>
</div>
<div class="r" style="left:923.50px;top:627.20px;width:51.50px;height:42.60px;overflow:hidden;background:linear-gradient(180deg,#3a78d0,#5a98e0 40%,#80b0d8)">
<div class="r" style="left:1px;top:6px;width:9px;height:10px;background:#c89878;border-radius:50%"></div>
<div class="r" style="left:0px;top:14px;width:11px;height:28px;background:linear-gradient(180deg,#d8b098,#a8c8e8 40%)"></div>
<div class="r" style="left:14px;top:6px;width:9px;height:10px;background:#c89878;border-radius:50%"></div>
<div class="r" style="left:13px;top:14px;width:11px;height:28px;background:linear-gradient(180deg,#d8b098,#a8c8e8 40%)"></div>
<div class="r" style="left:27px;top:6px;width:9px;height:10px;background:#c89878;border-radius:50%"></div>
<div class="r" style="left:26px;top:14px;width:11px;height:28px;background:linear-gradient(180deg,#d8b098,#a8c8e8 40%)"></div>
<div class="r" style="left:40px;top:6px;width:9px;height:10px;background:#c89878;border-radius:50%"></div>
<div class="r" style="left:39px;top:14px;width:11px;height:28px;background:linear-gradient(180deg,#d8b098,#a8c8e8 40%)"></div>
<div class="r" style="left:0;top:22px;width:52px;height:21px;background:linear-gradient(180deg,rgba(0,0,0,0),rgba(0,0,0,0.45))"></div>
<div class="r" style="left:3px;top:26.0px;width:40px;height:2.2px;background:rgba(255,255,255,0.8)"></div>
<div class="r" style="left:3px;top:30.8px;width:44px;height:2.2px;background:rgba(255,255,255,0.8)"></div>
<div class="r" style="left:3px;top:35.6px;width:36px;height:2.2px;background:rgba(255,255,255,0.8)"></div>
</div>
<div class="r" style="left:871.00px;top:671.00px;width:51.00px;height:28.00px;overflow:hidden;background:linear-gradient(90deg,#5a5a5a,#b8b8b8 40%,#d8d8d8 70%,#a0a0a0)">
<div class="r" style="left:18px;top:2px;width:16px;height:16px;background:#222;border-radius:50%"></div>
<div class="r" style="left:12px;top:14px;width:28px;height:14px;background:#282828;border-radius:40% 40% 0 0"></div>
<div class="r" style="left:0;top:14px;width:51px;height:14px;background:linear-gradient(180deg,rgba(0,0,0,0),rgba(0,0,0,0.45))"></div>
<div class="r" style="left:3px;top:22px;width:40px;height:2px;background:rgba(255,255,255,0.8)"></div>
</div>
<div class="r" style="left:923.50px;top:671.00px;width:51.50px;height:28.00px;overflow:hidden;background:linear-gradient(90deg,#9a9a9a,#d0d0d0 50%,#b8b8b8)">
<div class="r" style="left:16px;top:0px;width:22px;height:28px;background:radial-gradient(ellipse at 50% 55%,#e8e8e8,#a8a8a8 60%,#3a3a3a 75%);border-radius:45%"></div>
<div class="r" style="left:0;top:14px;width:52px;height:14px;background:linear-gradient(180deg,rgba(0,0,0,0),rgba(0,0,0,0.35))"></div>
<div class="r" style="left:3px;top:21px;width:42px;height:2px;background:rgba(255,255,255,0.8)"></div>
</div>
</div>
<div class="r" style="left:764.2px;top:716.9000000000001px;width:34px;height:34px;border-radius:50%;background:#b9bcef"></div>
<svg style="left:774.7px;top:727.9000000000001px" width="13" height="12" viewBox="0 0 13 12"><rect x="0.5" y="0.5" width="12" height="9" rx="1.5" fill="#c8283c"/><path d="M4 9.5 L6.5 11.8 L9 9.5Z" fill="#c8283c"/><path d="M6.5 8 C3.5 6 3 4.5 3.8 3.3 C4.6 2.3 6 2.6 6.5 3.6 C7 2.6 8.4 2.3 9.2 3.3 C10 4.5 9.5 6 6.5 8Z" fill="#fff"/></svg>
<div class="t" style="left:807.30px;top:719.56px;font-size:14.7px;color:#2b2da6;font-weight:400;-webkit-text-stroke:0.2px #2b2da6">lovesite.ro</div>
<div class="t" style="left:807.30px;top:738.13px;font-size:10px;color:#4f82c8;font-weight:400;">Entertainment, Fashion, Lifestyle</div>
<div class="r" style="left:764.20px;top:758.90px;width:213.00px;height:1.00px;background:#e6e6e6;"></div>
<div class="r" style="left:764.20px;top:810.70px;width:213.00px;height:1.00px;background:#e6e6e6;"></div>
<div class="r" style="left:764.20px;top:873.10px;width:213.00px;height:1.00px;background:#e6e6e6;"></div>
<div class="r" style="left:764.2px;top:768.3px;width:34px;height:34px;border-radius:50%;background:#d6f5d9"></div>
<svg style="left:776.7px;top:776.4000000000001px" width="9" height="17" viewBox="0 0 9 17"><path d="M4.5 0.5 V16.5" stroke="#22a03b" stroke-width="1.9"/><path d="M7.8 4.6 C7.5 3 6.2 2.6 4.5 2.6 C2.6 2.6 1.3 3.6 1.3 5 C1.3 8.6 8 7.4 8 11.4 C8 13.1 6.5 14.2 4.5 14.2 C2.5 14.2 1.2 13.4 0.9 11.6" fill="none" stroke="#22a03b" stroke-width="2.2"/></svg>
<div class="t" style="left:807.30px;top:771.17px;font-size:12.2px;color:#303030;font-weight:400;-webkit-text-stroke:0.15px #303030">169,00</div>
<div class="t" style="left:848.30px;top:774.56px;font-size:8.2px;color:#9a9a9a;font-weight:400;">RON</div>
<div class="t" style="left:807.30px;top:788.23px;font-size:11.3px;color:#8a8a8a;font-weight:400;">300,00</div>
<div class="t" style="left:845.30px;top:790.10px;font-size:9.1px;color:#9a9a9a;font-weight:400;">RON (Adult)</div>
<div class="r" style="left:764.2px;top:826.0px;width:34px;height:34px;border-radius:50%;background:#eef3fb"></div>
<svg style="left:774.5px;top:837.8px" width="14" height="11" viewBox="0 0 14 11"><path d="M1 0 V10 H14" fill="none" stroke="#2f6fc6" stroke-width="1.9"/><path d="M3 8 L6 4.6 L8.4 6.6 L12.4 2.4" fill="none" stroke="#2f6fc6" stroke-width="1.9"/><path d="M9.6 1.4 H13.3 V5.1Z" fill="#2f6fc6"/></svg>
<div class="t" style="left:807.10px;top:823.01px;font-size:10.5px;color:#6a6a6a;font-weight:400;">DA:</div>
<div class="t" style="left:807.10px;top:838.69px;font-size:11px;color:#252525;font-weight:400;-webkit-text-stroke:0.15px #252525">46</div>
<div class="t" style="left:842.50px;top:823.01px;font-size:10.5px;color:#6a6a6a;font-weight:400;">PA:</div>
<div class="t" style="left:842.50px;top:838.69px;font-size:11px;color:#252525;font-weight:400;-webkit-text-stroke:0.15px #252525">38</div>
<div class="t" style="left:879.70px;top:823.01px;font-size:10.5px;color:#6a6a6a;font-weight:400;">TF:</div>
<div class="t" style="left:879.70px;top:838.69px;font-size:11px;color:#252525;font-weight:400;-webkit-text-stroke:0.15px #252525">9</div>
<div class="t" style="left:908.20px;top:823.01px;font-size:10.5px;color:#6a6a6a;font-weight:400;">CF:</div>
<div class="t" style="left:908.20px;top:838.69px;font-size:11px;color:#252525;font-weight:400;-webkit-text-stroke:0.15px #252525">28</div>
<div class="t" style="left:944.50px;top:823.01px;font-size:10.5px;color:#6a6a6a;font-weight:400;">DR:</div>
<div class="t" style="left:944.50px;top:838.69px;font-size:11px;color:#252525;font-weight:400;-webkit-text-stroke:0.15px #252525">12</div>
<div class="t" style="left:807.30px;top:853.87px;font-size:8.9px;color:#a4a4a4;font-weight:400;">Ahrefs Traffic: 7.548</div>
<div class="r" style="left:764.4000000000001px;top:882.85px;width:86.2px;height:26.5px;background:#2f37c3;border-radius:3px"></div>
<div class="t" style="left:773.70px;top:889.79px;font-size:12.3px;color:#fff;font-weight:400;-webkit-text-stroke:0.15px #fff">View Details</div>
<div class="r" style="left:1000px;top:567.7px;width:236.5px;height:353.2px;background:#fff;border-radius:5px;box-shadow:0 0 0 0.5px rgba(0,0,0,0.03)"></div>
<div style="position:absolute;left:0;top:0;width:1280px;height:965px;filter:blur(0.3px)">
<div class="r" style="left:1011.50px;top:580.00px;width:212.50px;height:0.60px;background:#eee;"></div>
<div class="t" style="left:1079.90px;top:579.05px;font-size:20.5px;color:#141414;font-weight:400;font-family:'Liberation Serif',serif;transform:scaleX(0.895);transform-origin:0 0">FASHION</div>
<div class="t" style="left:1133.50px;top:586.07px;font-size:7px;color:#d83040;font-weight:700;letter-spacing:-0.3px">365</div>
<div class="r" style="left:1011.50px;top:599.00px;width:212.70px;height:7.00px;background:#d9343f;"></div>
<div class="r" style="left:1043.00px;top:602.00px;width:11.00px;height:1.20px;background:#f4c0c4;"></div>
<div class="r" style="left:1060.00px;top:602.00px;width:17.00px;height:1.20px;background:#f4c0c4;"></div>
<div class="r" style="left:1084.00px;top:602.00px;width:17.00px;height:1.20px;background:#f4c0c4;"></div>
<div class="r" style="left:1108.00px;top:602.00px;width:16.00px;height:1.20px;background:#f4c0c4;"></div>
<div class="r" style="left:1131.00px;top:602.00px;width:16.00px;height:1.20px;background:#f4c0c4;"></div>
<div class="r" style="left:1154.00px;top:602.00px;width:17.00px;height:1.20px;background:#f4c0c4;"></div>
<div class="r" style="left:1178.00px;top:602.00px;width:15.00px;height:1.20px;background:#f4c0c4;"></div>
<div class="r" style="left:1014.00px;top:614.30px;width:18.00px;height:2.20px;background:#222;"></div>
<div class="r" style="left:1035.00px;top:615.00px;width:52.00px;height:1.20px;background:#999;"></div>
<div class="r" style="left:1014.00px;top:621.20px;width:50.70px;height:40.50px;overflow:hidden;background:linear-gradient(180deg,#3a4a60 0%,#8a8a80 30%,#e0b060 42%,#a08868 60%,#6a5a48 80%,#4a4038)">
<div class="r" style="left:22px;top:13px;width:7px;height:7px;background:#fff8d0;border-radius:50%;box-shadow:0 0 6px #ffe8a0"></div>
<div class="r" style="left:3px;top:32px;width:38px;height:2px;background:rgba(255,255,255,0.8)"></div>
</div>
<div class="r" style="left:1014.00px;top:664.30px;width:50.70px;height:34.60px;overflow:hidden;background:linear-gradient(90deg,#3a4a38,#5a6a50 50%,#2a3a30)">
<div class="r" style="left:14px;top:2px;width:24px;height:32px;background:radial-gradient(ellipse at 45% 45%,#f0d0b8,#d8b090 50%,#c8a878 70%);border-radius:45%"></div>
<div class="r" style="left:3px;top:28px;width:40px;height:2px;background:rgba(255,255,255,0.8)"></div>
</div>
<div class="r" style="left:1066.70px;top:621.20px;width:102.90px;height:77.70px;overflow:hidden;background:linear-gradient(180deg,#88b8e8 0%,#a8cce8 35%,#d8e4ec 45%,#3a78b0 52%,#2a4a40 62%,#3a5a38 80%,#6a7a68 100%)">
<div class="r" style="left:68px;top:10px;width:32px;height:38px;background:radial-gradient(ellipse at 50% 40%,#8a7060,#5a4840 70%);border-radius:50% 50% 40% 40%"></div>
<div class="r" style="left:74px;top:26px;width:20px;height:12px;background:#d8b888;border-radius:50%"></div>
<div class="r" style="left:56px;top:44px;width:47px;height:34px;background:#8a9888;border-radius:50% 50% 0 0"></div>
<div class="r" style="left:42px;top:24px;width:22px;height:36px;background:linear-gradient(180deg,#f4ecea 0 35%,#e06a78 40%,#f0e0e0 50%,#e06a78 60%,#f0e0e0 70%);border-radius:40%"></div>
<div class="r" style="left:0;top:54px;width:103px;height:24px;background:linear-gradient(180deg,rgba(0,0,0,0),rgba(0,0,0,0.35))"></div>
<div class="r" style="left:4px;top:61.5px;width:92px;height:5px;background:rgba(255,255,255,0.9)"></div>
<div class="r" style="left:4px;top:70px;width:72px;height:5px;background:rgba(255,255,255,0.9)"></div>
</div>
<div class="r" style="left:1171.80px;top:621.20px;width:50.70px;height:40.50px;overflow:hidden;background:linear-gradient(90deg,#e8e6e4,#f6f4f2 40%,#d8d4d0)">
<div class="r" style="left:16px;top:3px;width:16px;height:30px;background:linear-gradient(180deg,#2a6a3a,#1a5a2a);clip-path:polygon(50% 0,100% 100%,0 100%)"></div>
<div class="r" style="left:28px;top:22px;width:22px;height:14px;background:#5a3a2a;border-radius:30%"></div>
<div class="r" style="left:0;top:20px;width:51px;height:20px;background:linear-gradient(180deg,rgba(0,0,0,0),rgba(0,0,0,0.45))"></div>
<div class="r" style="left:3px;top:32px;width:36px;height:2px;background:rgba(255,255,255,0.8)"></div>
</div>
<div class="r" style="left:1171.80px;top:664.30px;width:50.70px;height:34.60px;overflow:hidden;background:linear-gradient(180deg,#f4f4f4 0 30%,#8a5a48 38%,#7a4a3a 70%,#5a3a30)">
<div class="r" style="left:22px;top:3px;width:10px;height:9px;background:#3a6a3a;border-radius:50%"></div>
<div class="r" style="left:0;top:18px;width:51px;height:17px;background:linear-gradient(180deg,rgba(0,0,0,0),rgba(0,0,0,0.4))"></div>
<div class="r" style="left:3px;top:29px;width:40px;height:2px;background:rgba(255,255,255,0.8)"></div>
</div>
</div>
<div class="r" style="left:1011.5px;top:716.9000000000001px;width:34px;height:34px;border-radius:50%;background:#b9bcef"></div>
<div class="t" style="left:1024.20px;top:726.83px;font-size:14.5px;color:#1a1a1a;font-weight:700;font-family:'Liberation Serif',serif">F</div>
<div class="t" style="left:1054.60px;top:719.56px;font-size:14.7px;color:#2b2da6;font-weight:400;-webkit-text-stroke:0.2px #2b2da6">fashion365.ro</div>
<div class="t" style="left:1054.60px;top:738.13px;font-size:10px;color:#4f82c8;font-weight:400;">Beauty, Fashion, Style</div>
<div class="r" style="left:1011.50px;top:758.90px;width:213.00px;height:1.00px;background:#e6e6e6;"></div>
<div class="r" style="left:1011.50px;top:810.70px;width:213.00px;height:1.00px;background:#e6e6e6;"></div>
<div class="r" style="left:1011.50px;top:873.10px;width:213.00px;height:1.00px;background:#e6e6e6;"></div>
<div class="r" style="left:1011.5px;top:768.3px;width:34px;height:34px;border-radius:50%;background:#d6f5d9"></div>
<svg style="left:1024px;top:776.4000000000001px" width="9" height="17" viewBox="0 0 9 17"><path d="M4.5 0.5 V16.5" stroke="#22a03b" stroke-width="1.9"/><path d="M7.8 4.6 C7.5 3 6.2 2.6 4.5 2.6 C2.6 2.6 1.3 3.6 1.3 5 C1.3 8.6 8 7.4 8 11.4 C8 13.1 6.5 14.2 4.5 14.2 C2.5 14.2 1.2 13.4 0.9 11.6" fill="none" stroke="#22a03b" stroke-width="2.2"/></svg>
<div class="t" style="left:1054.60px;top:771.17px;font-size:12.2px;color:#303030;font-weight:400;-webkit-text-stroke:0.15px #303030">299,00</div>
<div class="t" style="left:1095.60px;top:774.56px;font-size:8.2px;color:#9a9a9a;font-weight:400;">RON</div>
<div class="t" style="left:1054.60px;top:788.23px;font-size:11.3px;color:#8a8a8a;font-weight:400;">450,00</div>
<div class="t" style="left:1092.60px;top:790.10px;font-size:9.1px;color:#9a9a9a;font-weight:400;">RON (Adult)</div>
<div class="r" style="left:1011.5px;top:826.0px;width:34px;height:34px;border-radius:50%;background:#eef3fb"></div>
<svg style="left:1021.8px;top:837.8px" width="14" height="11" viewBox="0 0 14 11"><path d="M1 0 V10 H14" fill="none" stroke="#2f6fc6" stroke-width="1.9"/><path d="M3 8 L6 4.6 L8.4 6.6 L12.4 2.4" fill="none" stroke="#2f6fc6" stroke-width="1.9"/><path d="M9.6 1.4 H13.3 V5.1Z" fill="#2f6fc6"/></svg>
<div class="t" style="left:1054.40px;top:823.01px;font-size:10.5px;color:#6a6a6a;font-weight:400;">DA:</div>
<div class="t" style="left:1054.40px;top:838.69px;font-size:11px;color:#252525;font-weight:400;-webkit-text-stroke:0.15px #252525">51</div>
<div class="t" style="left:1089.80px;top:823.01px;font-size:10.5px;color:#6a6a6a;font-weight:400;">PA:</div>
<div class="t" style="left:1089.80px;top:838.69px;font-size:11px;color:#252525;font-weight:400;-webkit-text-stroke:0.15px #252525">42</div>
<div class="t" style="left:1127.00px;top:823.01px;font-size:10.5px;color:#6a6a6a;font-weight:400;">TF:</div>
<div class="t" style="left:1127.00px;top:838.69px;font-size:11px;color:#252525;font-weight:400;-webkit-text-stroke:0.15px #252525">10</div>
<div class="t" style="left:1155.50px;top:823.01px;font-size:10.5px;color:#6a6a6a;font-weight:400;">CF:</div>
<div class="t" style="left:1155.50px;top:838.69px;font-size:11px;color:#252525;font-weight:400;-webkit-text-stroke:0.15px #252525">28</div>
<div class="t" style="left:1191.80px;top:823.01px;font-size:10.5px;color:#6a6a6a;font-weight:400;">DR:</div>
<div class="t" style="left:1191.80px;top:838.69px;font-size:11px;color:#252525;font-weight:400;-webkit-text-stroke:0.15px #252525">34</div>
<div class="t" style="left:1054.60px;top:853.87px;font-size:8.9px;color:#a4a4a4;font-weight:400;">Ahrefs Traffic: 7.378</div>
<div class="r" style="left:1011.7px;top:882.85px;width:86.2px;height:26.5px;background:#2f37c3;border-radius:3px"></div>
<div class="t" style="left:1021.00px;top:889.79px;font-size:12.3px;color:#fff;font-weight:400;-webkit-text-stroke:0.15px #fff">View Details</div>
</body></html>
